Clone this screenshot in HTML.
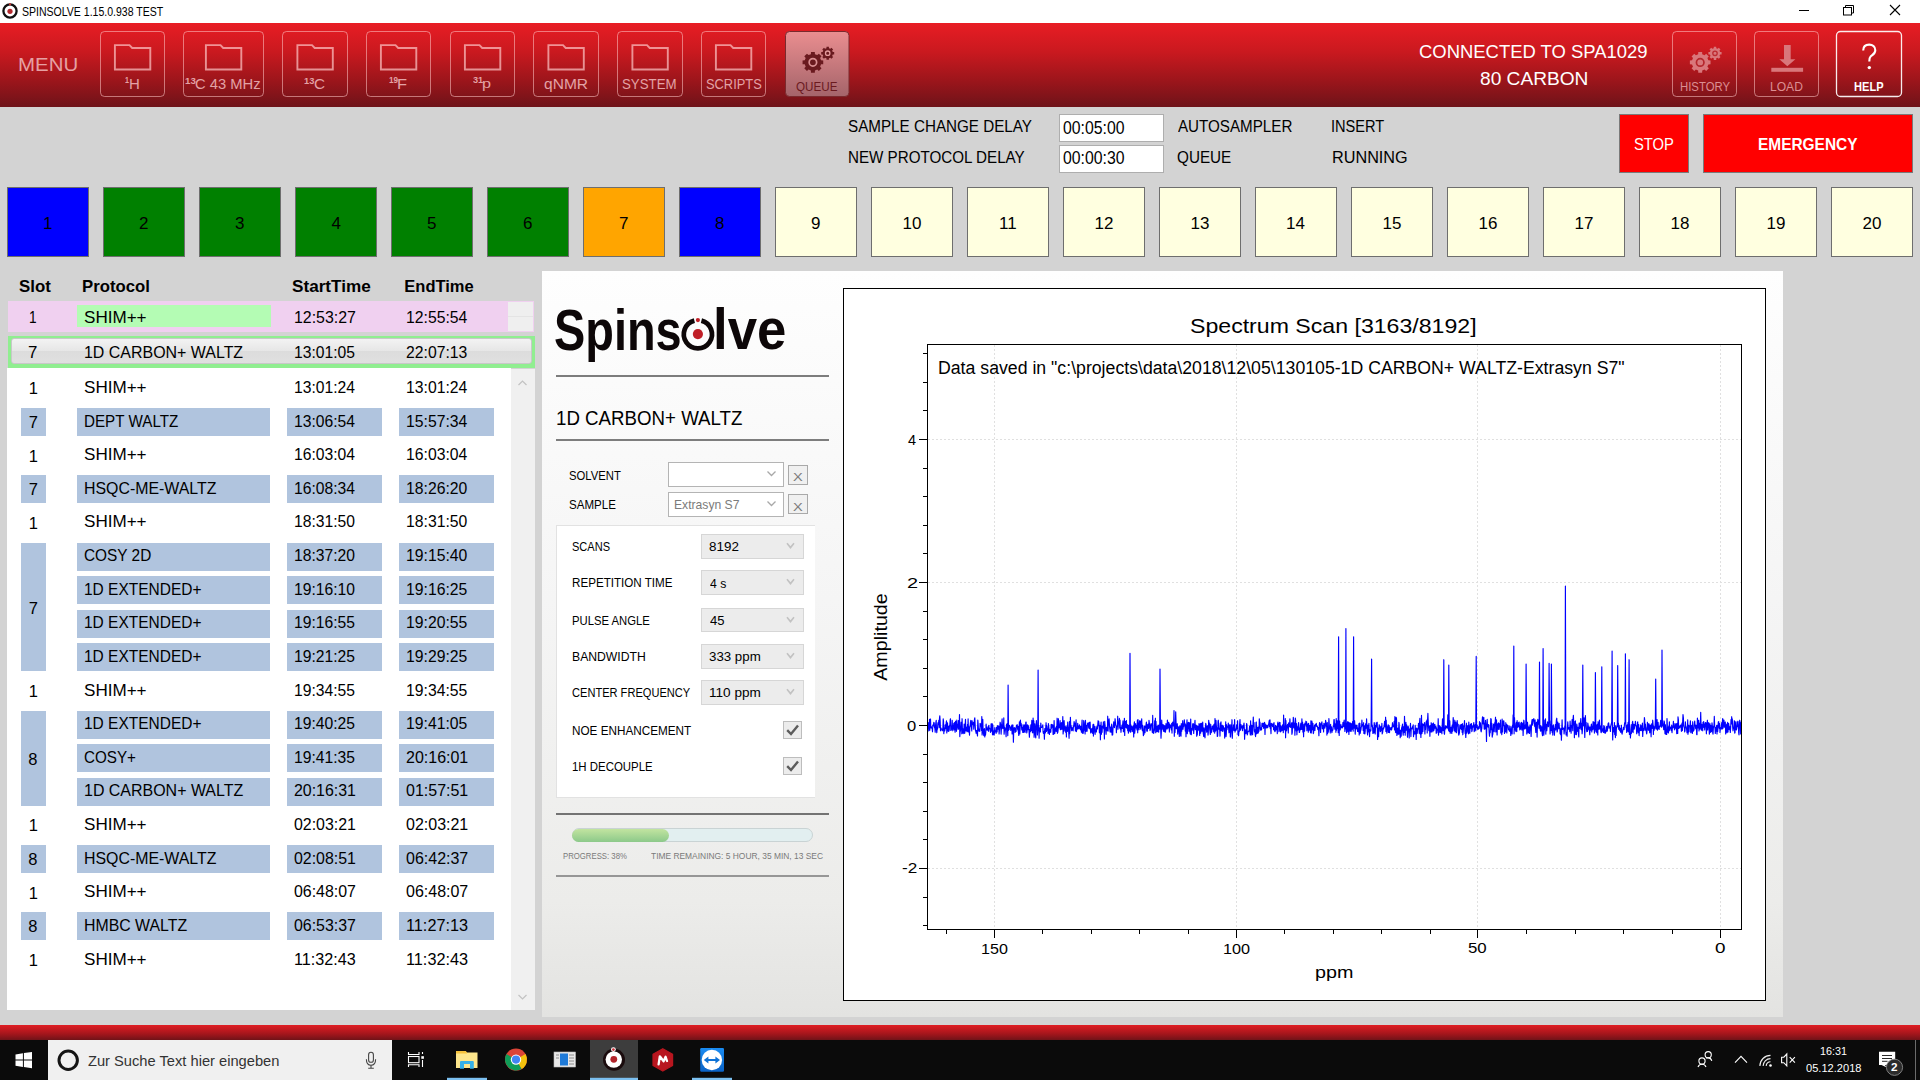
<!DOCTYPE html>
<html><head><meta charset="utf-8"><title>Spinsolve</title>
<style>
html,body{margin:0;padding:0;}
body{width:1920px;height:1080px;overflow:hidden;position:relative;background:#d3d3d3;font-family:"Liberation Sans",sans-serif;}
.t{position:absolute;white-space:nowrap;}
.a{position:absolute;box-sizing:border-box;}

</style></head><body>
<div class=a style='left:0;top:0;width:1920px;height:23px;background:#fff'></div><svg class=a style='left:0;top:0' width=22 height=23 viewBox='0 0 22 23'>
<circle cx='10' cy='11' r='6.6' fill='none' stroke='#111' stroke-width='2.3'/>
<circle cx='10' cy='11.3' r='2.6' fill='#b3282d'/>
<circle cx='10' cy='4.3' r='1.1' fill='#c33'/>
</svg><div class=t style='left:22.12px;top:6.00px;font-size:12px;line-height:12px;font-weight:400;color:#000;font-family:"Liberation Sans",sans-serif;transform:scaleX(0.8769);transform-origin:0 0;'>SPINSOLVE 1.15.0.938 TEST</div><svg class=a style='left:1780px;top:0' width=140 height=23 viewBox='1780 0 140 23'>
<line x1='1799' y1='10.5' x2='1809' y2='10.5' stroke='#000' stroke-width='1'/>
<rect x='1843.5' y='7.5' width='8' height='7.5' fill='none' stroke='#000' stroke-width='1'/>
<path d='M1845.5 7.5 V5.5 H1853.5 V13 H1851.5' fill='none' stroke='#000' stroke-width='1'/>
<path d='M1890 5 L1900 15 M1900 5 L1890 15' stroke='#000' stroke-width='1.1'/>
</svg><div class=a style='left:0;top:23px;width:1920px;height:84px;background:linear-gradient(#e81d24 0%,#c9191f 35%,#9a151b 70%,#6e1319 100%)'></div><div class=t style='left:18.35px;top:55.00px;font-size:19px;line-height:19px;font-weight:400;color:#e6a0a3;font-family:"Liberation Sans",sans-serif;transform:scaleX(1.0755);transform-origin:0 0;'>MENU</div><svg class=a style='left:0;top:0' width=1920 height=110 viewBox='0 0 1920 110'><rect x='100.5' y='31.5' width='64' height='65' rx='4' ry='4' fill='none' stroke='rgba(255,200,200,0.55)' stroke-width='1'/><path d='M114.9 45.1 H129.5 L132.2 48.0 H150.3 V69.5 H114.9 Z' fill='none' stroke='rgba(255,205,205,0.68)' stroke-width='1.9'/><rect x='183.5' y='31.5' width='80' height='65' rx='4' ry='4' fill='none' stroke='rgba(255,200,200,0.55)' stroke-width='1'/><path d='M205.9 45.1 H220.5 L223.2 48.0 H241.3 V69.5 H205.9 Z' fill='none' stroke='rgba(255,205,205,0.68)' stroke-width='1.9'/><rect x='282.5' y='31.5' width='65' height='65' rx='4' ry='4' fill='none' stroke='rgba(255,200,200,0.55)' stroke-width='1'/><path d='M297.4 45.1 H312.0 L314.7 48.0 H332.8 V69.5 H297.4 Z' fill='none' stroke='rgba(255,205,205,0.68)' stroke-width='1.9'/><rect x='366.5' y='31.5' width='64' height='65' rx='4' ry='4' fill='none' stroke='rgba(255,200,200,0.55)' stroke-width='1'/><path d='M380.9 45.1 H395.5 L398.2 48.0 H416.3 V69.5 H380.9 Z' fill='none' stroke='rgba(255,205,205,0.68)' stroke-width='1.9'/><rect x='450.5' y='31.5' width='64' height='65' rx='4' ry='4' fill='none' stroke='rgba(255,200,200,0.55)' stroke-width='1'/><path d='M464.9 45.1 H479.5 L482.2 48.0 H500.3 V69.5 H464.9 Z' fill='none' stroke='rgba(255,205,205,0.68)' stroke-width='1.9'/><rect x='533.5' y='31.5' width='65' height='65' rx='4' ry='4' fill='none' stroke='rgba(255,200,200,0.55)' stroke-width='1'/><path d='M548.4 45.1 H563.0 L565.7 48.0 H583.8 V69.5 H548.4 Z' fill='none' stroke='rgba(255,205,205,0.68)' stroke-width='1.9'/><rect x='617.5' y='31.5' width='65' height='65' rx='4' ry='4' fill='none' stroke='rgba(255,200,200,0.55)' stroke-width='1'/><path d='M632.4 45.1 H647.0 L649.7 48.0 H667.8 V69.5 H632.4 Z' fill='none' stroke='rgba(255,205,205,0.68)' stroke-width='1.9'/><rect x='701.5' y='31.5' width='64' height='65' rx='4' ry='4' fill='none' stroke='rgba(255,200,200,0.55)' stroke-width='1'/><path d='M715.9 45.1 H730.5 L733.2 48.0 H751.3 V69.5 H715.9 Z' fill='none' stroke='rgba(255,205,205,0.68)' stroke-width='1.9'/><defs><linearGradient id='qg' x1='0' y1='0' x2='0' y2='1'><stop offset='0' stop-color='#ea8e90'/><stop offset='1' stop-color='#a4646a'/></linearGradient></defs><rect x='785.5' y='31.5' width='63.5' height='65' rx='4' fill='url(#qg)' stroke='#7a2a2e' stroke-width='1'/><path d='M821.05 60.27 L823.23 60.39 L823.23 64.21 L821.05 64.33 L820.10 66.63 L821.55 68.25 L818.85 70.95 L817.23 69.50 L814.93 70.45 L814.81 72.63 L810.99 72.63 L810.87 70.45 L808.57 69.50 L806.95 70.95 L804.25 68.25 L805.70 66.63 L804.75 64.33 L802.57 64.21 L802.57 60.39 L804.75 60.27 L805.70 57.97 L804.25 56.35 L806.95 53.65 L808.57 55.10 L810.87 54.15 L810.99 51.97 L814.81 51.97 L814.93 54.15 L817.23 55.10 L818.85 53.65 L821.55 56.35 L820.10 57.97 Z' fill='#6a1a1f'/><circle cx='812.9' cy='62.3' r='3.75' fill='none' stroke='#d98f92' stroke-width='1.7'/><path d='M832.75 51.95 L834.19 52.00 L834.19 54.40 L832.75 54.45 L832.15 55.88 L833.14 56.94 L831.44 58.64 L830.38 57.65 L828.95 58.25 L828.90 59.69 L826.50 59.69 L826.45 58.25 L825.02 57.65 L823.96 58.64 L822.26 56.94 L823.25 55.88 L822.65 54.45 L821.21 54.40 L821.21 52.00 L822.65 51.95 L823.25 50.52 L822.26 49.46 L823.96 47.76 L825.02 48.75 L826.45 48.15 L826.50 46.71 L828.90 46.71 L828.95 48.15 L830.38 48.75 L831.44 47.76 L833.14 49.46 L832.15 50.52 Z' fill='#6a1a1f'/><circle cx='827.7' cy='53.2' r='2.2' fill='none' stroke='#e39a9c' stroke-width='1.3'/><rect x='1672.5' y='31.5' width='64' height='65' rx='4' fill='none' stroke='rgba(255,200,200,0.55)' stroke-width='1'/><rect x='1754.5' y='31.5' width='64' height='65' rx='4' fill='none' stroke='rgba(255,200,200,0.55)' stroke-width='1'/><rect x='1836.5' y='31.5' width='65' height='65' rx='4' fill='none' stroke='rgba(255,255,255,0.92)' stroke-width='1.3'/><path d='M1708.35 60.37 L1710.53 60.49 L1710.53 64.31 L1708.35 64.43 L1707.40 66.73 L1708.85 68.35 L1706.15 71.05 L1704.53 69.60 L1702.23 70.55 L1702.11 72.73 L1698.29 72.73 L1698.17 70.55 L1695.87 69.60 L1694.25 71.05 L1691.55 68.35 L1693.00 66.73 L1692.05 64.43 L1689.87 64.31 L1689.87 60.49 L1692.05 60.37 L1693.00 58.07 L1691.55 56.45 L1694.25 53.75 L1695.87 55.20 L1698.17 54.25 L1698.29 52.07 L1702.11 52.07 L1702.23 54.25 L1704.53 55.20 L1706.15 53.75 L1708.85 56.45 L1707.40 58.07 Z' fill='#d9777b'/><circle cx='1700.2' cy='62.4' r='3.75' fill='none' stroke='#b5262c' stroke-width='1.7'/><path d='M1720.05 52.05 L1721.59 52.08 L1721.59 54.52 L1720.05 54.55 L1719.45 55.98 L1720.52 57.10 L1718.80 58.82 L1717.68 57.75 L1716.25 58.35 L1716.22 59.89 L1713.78 59.89 L1713.75 58.35 L1712.32 57.75 L1711.20 58.82 L1709.48 57.10 L1710.55 55.98 L1709.95 54.55 L1708.41 54.52 L1708.41 52.08 L1709.95 52.05 L1710.55 50.62 L1709.48 49.50 L1711.20 47.78 L1712.32 48.85 L1713.75 48.25 L1713.78 46.71 L1716.22 46.71 L1716.25 48.25 L1717.68 48.85 L1718.80 47.78 L1720.52 49.50 L1719.45 50.62 Z' fill='#d9777b'/><circle cx='1715' cy='53.3' r='2.2' fill='none' stroke='#bd2a30' stroke-width='1.3'/><path d='M1784 45 H1790.7 V59.3 H1795.4 L1787.35 66.3 L1779.3 59.3 H1784 Z' fill='#d9777b'/><rect x='1771.3' y='67.8' width='31.8' height='4' fill='#d9777b'/><path d='M1863.2 50.5 C1863.2 46.3 1866 44.6 1869.2 44.6 C1872.6 44.6 1875.3 46.6 1875.3 50.2 C1875.3 53.8 1872.2 55 1870.6 56.6 C1869.5 57.7 1869.3 58.8 1869.3 61.6' fill='none' stroke='#fff' stroke-width='2.1'/><circle cx='1869.3' cy='67.6' r='1.7' fill='#fff'/></svg><div class=t style='left:124.75px;top:75.00px;font-size:9.5px;line-height:9.5px;font-weight:700;color:#e3a2a6;font-family:"Liberation Sans",sans-serif;transform:scaleX(0.7500);transform-origin:0 0;'>1</div><div class=t style='left:129.00px;top:76.00px;font-size:15px;line-height:15px;font-weight:400;color:#e3a2a6;font-family:"Liberation Sans",sans-serif;'>H</div><div class=t style='left:185.38px;top:75.50px;font-size:9.5px;line-height:9.5px;font-weight:700;color:#e3a2a6;font-family:"Liberation Sans",sans-serif;transform:scaleX(1.0222);transform-origin:0 0;'>13</div><div class=t style='left:195.32px;top:76.20px;font-size:15px;line-height:15px;font-weight:400;color:#e3a2a6;font-family:"Liberation Sans",sans-serif;transform:scaleX(0.9846);transform-origin:0 0;'>C 43 MHz</div><div class=t style='left:304.32px;top:75.50px;font-size:9.5px;line-height:9.5px;font-weight:700;color:#e3a2a6;font-family:"Liberation Sans",sans-serif;transform:scaleX(0.9778);transform-origin:0 0;'>13</div><div class=t style='left:313.78px;top:76.20px;font-size:15px;line-height:15px;font-weight:400;color:#e3a2a6;font-family:"Liberation Sans",sans-serif;transform:scaleX(1.0222);transform-origin:0 0;'>C</div><div class=t style='left:388.89px;top:75.00px;font-size:9.5px;line-height:9.5px;font-weight:700;color:#e3a2a6;font-family:"Liberation Sans",sans-serif;transform:scaleX(0.8611);transform-origin:0 0;'>19</div><div class=t style='left:397.41px;top:75.90px;font-size:15px;line-height:15px;font-weight:400;color:#e3a2a6;font-family:"Liberation Sans",sans-serif;transform:scaleX(1.0938);transform-origin:0 0;'>F</div><div class=t style='left:473.10px;top:75.00px;font-size:9.5px;line-height:9.5px;font-weight:700;color:#e3a2a6;font-family:"Liberation Sans",sans-serif;transform:scaleX(0.9650);transform-origin:0 0;'>31</div><div class=t style='left:482.25px;top:76.50px;font-size:13px;line-height:13px;font-weight:400;color:#e3a2a6;font-family:"Liberation Sans",sans-serif;transform:scaleX(1.2500);transform-origin:0 0;'>p</div><div class=t style='left:543.71px;top:75.90px;font-size:15px;line-height:15px;font-weight:400;color:#e3a2a6;font-family:"Liberation Sans",sans-serif;transform:scaleX(1.0366);transform-origin:0 0;'>qNMR</div><div class=t style='left:622.21px;top:76.25px;font-size:15px;line-height:15px;font-weight:400;color:#e3a2a6;font-family:"Liberation Sans",sans-serif;transform:scaleX(0.8858);transform-origin:0 0;'>SYSTEM</div><div class=t style='left:705.74px;top:76.25px;font-size:15px;line-height:15px;font-weight:400;color:#e3a2a6;font-family:"Liberation Sans",sans-serif;transform:scaleX(0.8571);transform-origin:0 0;'>SCRIPTS</div><div class=t style='left:796.07px;top:81.10px;font-size:12.5px;line-height:12.5px;font-weight:400;color:#6b1a1f;font-family:"Liberation Sans",sans-serif;transform:scaleX(0.9326);transform-origin:0 0;'>QUEUE</div><div class=t style='left:1419.43px;top:41.90px;font-size:19px;line-height:19px;font-weight:400;color:#fff;font-family:"Liberation Sans",sans-serif;transform:scaleX(0.9705);transform-origin:0 0;'>CONNECTED TO SPA1029</div><div class=t style='left:1479.99px;top:68.90px;font-size:19px;line-height:19px;font-weight:400;color:#fff;font-family:"Liberation Sans",sans-serif;transform:scaleX(1.0067);transform-origin:0 0;'>80 CARBON</div><div class=t style='left:1679.65px;top:81.30px;font-size:12px;line-height:12px;font-weight:400;color:#dc8e92;font-family:"Liberation Sans",sans-serif;transform:scaleX(0.9451);transform-origin:0 0;'>HISTORY</div><div class=t style='left:1769.99px;top:81.30px;font-size:12px;line-height:12px;font-weight:400;color:#dc8e92;font-family:"Liberation Sans",sans-serif;transform:scaleX(1.0065);transform-origin:0 0;'>LOAD</div><div class=t style='left:1853.68px;top:81.30px;font-size:12px;line-height:12px;font-weight:700;color:#fff;font-family:"Liberation Sans",sans-serif;transform:scaleX(0.9226);transform-origin:0 0;'>HELP</div><div class=t style='left:848.45px;top:119.10px;font-size:16px;line-height:16px;font-weight:400;color:#000;font-family:"Liberation Sans",sans-serif;transform:scaleX(0.9505);transform-origin:0 0;'>SAMPLE CHANGE DELAY</div><div class=t style='left:848.45px;top:150.10px;font-size:16px;line-height:16px;font-weight:400;color:#000;font-family:"Liberation Sans",sans-serif;transform:scaleX(0.9478);transform-origin:0 0;'>NEW PROTOCOL DELAY</div><div class=a style='left:1059px;top:114px;width:105px;height:28px;background:#fff;border:1px solid #aeaeae'></div><div class=a style='left:1059px;top:145px;width:105px;height:28px;background:#fff;border:1px solid #aeaeae'></div><div class=t style='left:1062.85px;top:120.25px;font-size:17.5px;line-height:17.5px;font-weight:400;color:#000;font-family:"Liberation Sans",sans-serif;transform:scaleX(0.9030);transform-origin:0 0;'>00:05:00</div><div class=t style='left:1062.85px;top:150.25px;font-size:17.5px;line-height:17.5px;font-weight:400;color:#000;font-family:"Liberation Sans",sans-serif;transform:scaleX(0.9030);transform-origin:0 0;'>00:00:30</div><div class=t style='left:1178.20px;top:119.10px;font-size:16px;line-height:16px;font-weight:400;color:#000;font-family:"Liberation Sans",sans-serif;transform:scaleX(0.9483);transform-origin:0 0;'>AUTOSAMPLER</div><div class=t style='left:1177.25px;top:150.10px;font-size:16px;line-height:16px;font-weight:400;color:#000;font-family:"Liberation Sans",sans-serif;transform:scaleX(0.9545);transform-origin:0 0;'>QUEUE</div><div class=t style='left:1330.97px;top:119.10px;font-size:16px;line-height:16px;font-weight:400;color:#000;font-family:"Liberation Sans",sans-serif;transform:scaleX(0.9125);transform-origin:0 0;'>INSERT</div><div class=t style='left:1331.79px;top:150.10px;font-size:16px;line-height:16px;font-weight:400;color:#000;font-family:"Liberation Sans",sans-serif;transform:scaleX(1.0137);transform-origin:0 0;'>RUNNING</div><div class=a style='left:1619px;top:114px;width:70px;height:59px;background:#ff0000;border:1px solid #7a7a7a'></div><div class=a style='left:1703px;top:114px;width:210px;height:59px;background:#ff0000;border:1px solid #7a7a7a'></div><div class=t style='left:1633.60px;top:136.00px;font-size:16.5px;line-height:16.5px;font-weight:400;color:#fff;font-family:"Liberation Sans",sans-serif;transform:scaleX(0.8953);transform-origin:0 0;'>STOP</div><div class=t style='left:1757.81px;top:136.00px;font-size:16.5px;line-height:16.5px;font-weight:700;color:#fff;font-family:"Liberation Sans",sans-serif;transform:scaleX(0.9357);transform-origin:0 0;'>EMERGENCY</div><div class=a style='left:7px;top:187px;width:82px;height:70px;background:#0000ff;border:1px solid #6e6e6e'></div><div class=t style='left:43.00px;top:214.90px;font-size:17px;line-height:17px;font-weight:400;color:#000;font-family:"Liberation Sans",sans-serif;'>1</div><div class=a style='left:103px;top:187px;width:82px;height:70px;background:#008000;border:1px solid #6e6e6e'></div><div class=t style='left:139.00px;top:214.90px;font-size:17px;line-height:17px;font-weight:400;color:#000;font-family:"Liberation Sans",sans-serif;'>2</div><div class=a style='left:199px;top:187px;width:82px;height:70px;background:#008000;border:1px solid #6e6e6e'></div><div class=t style='left:235.00px;top:214.90px;font-size:17px;line-height:17px;font-weight:400;color:#000;font-family:"Liberation Sans",sans-serif;'>3</div><div class=a style='left:295px;top:187px;width:82px;height:70px;background:#008000;border:1px solid #6e6e6e'></div><div class=t style='left:331.50px;top:214.90px;font-size:17px;line-height:17px;font-weight:400;color:#000;font-family:"Liberation Sans",sans-serif;'>4</div><div class=a style='left:391px;top:187px;width:82px;height:70px;background:#008000;border:1px solid #6e6e6e'></div><div class=t style='left:427.00px;top:214.90px;font-size:17px;line-height:17px;font-weight:400;color:#000;font-family:"Liberation Sans",sans-serif;'>5</div><div class=a style='left:487px;top:187px;width:82px;height:70px;background:#008000;border:1px solid #6e6e6e'></div><div class=t style='left:523.00px;top:214.90px;font-size:17px;line-height:17px;font-weight:400;color:#000;font-family:"Liberation Sans",sans-serif;'>6</div><div class=a style='left:583px;top:187px;width:82px;height:70px;background:#ffa500;border:1px solid #6e6e6e'></div><div class=t style='left:619.00px;top:214.90px;font-size:17px;line-height:17px;font-weight:400;color:#000;font-family:"Liberation Sans",sans-serif;'>7</div><div class=a style='left:679px;top:187px;width:82px;height:70px;background:#0000ff;border:1px solid #6e6e6e'></div><div class=t style='left:715.00px;top:214.90px;font-size:17px;line-height:17px;font-weight:400;color:#000;font-family:"Liberation Sans",sans-serif;'>8</div><div class=a style='left:775px;top:187px;width:82px;height:70px;background:#ffffe0;border:1px solid #6e6e6e'></div><div class=t style='left:811.00px;top:214.90px;font-size:17px;line-height:17px;font-weight:400;color:#000;font-family:"Liberation Sans",sans-serif;'>9</div><div class=a style='left:871px;top:187px;width:82px;height:70px;background:#ffffe0;border:1px solid #6e6e6e'></div><div class=t style='left:902.50px;top:214.90px;font-size:17px;line-height:17px;font-weight:400;color:#000;font-family:"Liberation Sans",sans-serif;'>10</div><div class=a style='left:967px;top:187px;width:82px;height:70px;background:#ffffe0;border:1px solid #6e6e6e'></div><div class=t style='left:999.00px;top:214.90px;font-size:17px;line-height:17px;font-weight:400;color:#000;font-family:"Liberation Sans",sans-serif;'>11</div><div class=a style='left:1063px;top:187px;width:82px;height:70px;background:#ffffe0;border:1px solid #6e6e6e'></div><div class=t style='left:1094.50px;top:214.90px;font-size:17px;line-height:17px;font-weight:400;color:#000;font-family:"Liberation Sans",sans-serif;'>12</div><div class=a style='left:1159px;top:187px;width:82px;height:70px;background:#ffffe0;border:1px solid #6e6e6e'></div><div class=t style='left:1190.50px;top:214.90px;font-size:17px;line-height:17px;font-weight:400;color:#000;font-family:"Liberation Sans",sans-serif;'>13</div><div class=a style='left:1255px;top:187px;width:82px;height:70px;background:#ffffe0;border:1px solid #6e6e6e'></div><div class=t style='left:1286.00px;top:214.90px;font-size:17px;line-height:17px;font-weight:400;color:#000;font-family:"Liberation Sans",sans-serif;'>14</div><div class=a style='left:1351px;top:187px;width:82px;height:70px;background:#ffffe0;border:1px solid #6e6e6e'></div><div class=t style='left:1382.50px;top:214.90px;font-size:17px;line-height:17px;font-weight:400;color:#000;font-family:"Liberation Sans",sans-serif;'>15</div><div class=a style='left:1447px;top:187px;width:82px;height:70px;background:#ffffe0;border:1px solid #6e6e6e'></div><div class=t style='left:1478.50px;top:214.90px;font-size:17px;line-height:17px;font-weight:400;color:#000;font-family:"Liberation Sans",sans-serif;'>16</div><div class=a style='left:1543px;top:187px;width:82px;height:70px;background:#ffffe0;border:1px solid #6e6e6e'></div><div class=t style='left:1574.50px;top:214.90px;font-size:17px;line-height:17px;font-weight:400;color:#000;font-family:"Liberation Sans",sans-serif;'>17</div><div class=a style='left:1639px;top:187px;width:82px;height:70px;background:#ffffe0;border:1px solid #6e6e6e'></div><div class=t style='left:1670.50px;top:214.90px;font-size:17px;line-height:17px;font-weight:400;color:#000;font-family:"Liberation Sans",sans-serif;'>18</div><div class=a style='left:1735px;top:187px;width:82px;height:70px;background:#ffffe0;border:1px solid #6e6e6e'></div><div class=t style='left:1766.50px;top:214.90px;font-size:17px;line-height:17px;font-weight:400;color:#000;font-family:"Liberation Sans",sans-serif;'>19</div><div class=a style='left:1831px;top:187px;width:82px;height:70px;background:#ffffe0;border:1px solid #6e6e6e'></div><div class=t style='left:1862.50px;top:214.90px;font-size:17px;line-height:17px;font-weight:400;color:#000;font-family:"Liberation Sans",sans-serif;'>20</div><div class=t style='left:18.98px;top:278.00px;font-size:16.5px;line-height:16.5px;font-weight:700;color:#000;font-family:"Liberation Sans",sans-serif;transform:scaleX(1.0200);transform-origin:0 0;'>Slot</div><div class=t style='left:82.49px;top:278.00px;font-size:16.5px;line-height:16.5px;font-weight:700;color:#000;font-family:"Liberation Sans",sans-serif;transform:scaleX(1.0138);transform-origin:0 0;'>Protocol</div><div class=t style='left:291.86px;top:278.10px;font-size:16.5px;line-height:16.5px;font-weight:700;color:#000;font-family:"Liberation Sans",sans-serif;transform:scaleX(1.0392);transform-origin:0 0;'>StartTime</div><div class=t style='left:404.30px;top:278.10px;font-size:16.5px;line-height:16.5px;font-weight:700;color:#000;font-family:"Liberation Sans",sans-serif;'>EndTime</div><div class=a style='left:7px;top:368px;width:504px;height:642px;background:#fff'></div><div class=a style='left:511px;top:369px;width:24px;height:641px;background:#f0f0f0'></div><svg class=a style='left:511px;top:369px' width=24 height=641><path d='M7.5 16 L11.5 12 L15.5 16' fill='none' stroke='#c2c2c2' stroke-width='1.2'/><path d='M7.5 626 L11.5 630 L15.5 626' fill='none' stroke='#c2c2c2' stroke-width='1.2'/></svg><div class=a style='left:8px;top:300.5px;width:525.5px;height:31.5px;background:#f0d0f0'></div><div class=a style='left:77px;top:305px;width:193.5px;height:21.5px;background:#b4fcb4'></div><div class=a style='left:508px;top:302px;width:24.5px;height:29px;background:#efefef'></div><div class=a style='left:508px;top:316px;width:24.5px;height:1px;background:#e4e4e4'></div><div class=t style='left:28.77px;top:309.25px;font-size:16.5px;line-height:16.5px;font-weight:400;color:#000;font-family:"Liberation Sans",sans-serif;transform:scaleX(0.8286);transform-origin:0 0;'>1</div><div class=t style='left:83.57px;top:309.25px;font-size:16.5px;line-height:16.5px;font-weight:400;color:#000;font-family:"Liberation Sans",sans-serif;transform:scaleX(1.0339);transform-origin:0 0;'>SHIM++</div><div class=t style='left:294.04px;top:308.80px;font-size:16.5px;line-height:16.5px;font-weight:400;color:#000;font-family:"Liberation Sans",sans-serif;transform:scaleX(0.9645);transform-origin:0 0;'>12:53:27</div><div class=t style='left:406.15px;top:308.80px;font-size:16.5px;line-height:16.5px;font-weight:400;color:#000;font-family:"Liberation Sans",sans-serif;transform:scaleX(0.9540);transform-origin:0 0;'>12:55:54</div><div class=a style='left:7.5px;top:335.5px;width:527px;height:32.5px;background:#90ee90'></div><div class=a style='left:10.5px;top:337.5px;width:521px;height:26px;border:1px solid #c8c8c8;border-radius:3px;background:linear-gradient(#f3f3f3,#e6e6e6 50%,#dcdcdc 51%,#e0e0e0)'></div><div class=t style='left:28.08px;top:343.60px;font-size:16.5px;line-height:16.5px;font-weight:400;color:#000;font-family:"Liberation Sans",sans-serif;transform:scaleX(1.0214);transform-origin:0 0;'>7</div><div class=t style='left:84.03px;top:344.00px;font-size:16.5px;line-height:16.5px;font-weight:400;color:#000;font-family:"Liberation Sans",sans-serif;transform:scaleX(0.9669);transform-origin:0 0;'>1D CARBON+ WALTZ</div><div class=t style='left:294.05px;top:344.00px;font-size:16.5px;line-height:16.5px;font-weight:400;color:#000;font-family:"Liberation Sans",sans-serif;transform:scaleX(0.9492);transform-origin:0 0;'>13:01:05</div><div class=t style='left:406.15px;top:344.00px;font-size:16.5px;line-height:16.5px;font-weight:400;color:#000;font-family:"Liberation Sans",sans-serif;transform:scaleX(0.9540);transform-origin:0 0;'>22:07:13</div><div class=a style='left:21px;top:542.50px;width:25px;height:128.86px;background:#b0c4de'></div><div class=t style='left:28.70px;top:599.63px;font-size:16.5px;line-height:16.5px;font-weight:400;color:#000;font-family:"Liberation Sans",sans-serif;'>7</div><div class=a style='left:21px;top:710.60px;width:25px;height:95.24px;background:#b0c4de'></div><div class=t style='left:28.20px;top:750.92px;font-size:16.5px;line-height:16.5px;font-weight:400;color:#000;font-family:"Liberation Sans",sans-serif;'>8</div><div class=t style='left:28.70px;top:380.30px;font-size:16.5px;line-height:16.5px;font-weight:400;color:#000;font-family:"Liberation Sans",sans-serif;'>1</div><div class=t style='left:83.57px;top:379.00px;font-size:16.5px;line-height:16.5px;font-weight:400;color:#000;font-family:"Liberation Sans",sans-serif;transform:scaleX(1.0339);transform-origin:0 0;'>SHIM++</div><div class=t style='left:294.05px;top:379.00px;font-size:16.5px;line-height:16.5px;font-weight:400;color:#000;font-family:"Liberation Sans",sans-serif;transform:scaleX(0.9492);transform-origin:0 0;'>13:01:24</div><div class=t style='left:406.15px;top:379.00px;font-size:16.5px;line-height:16.5px;font-weight:400;color:#000;font-family:"Liberation Sans",sans-serif;transform:scaleX(0.9540);transform-origin:0 0;'>13:01:24</div><div class=a style='left:21px;top:408.02px;width:25px;height:28px;background:#b0c4de'></div><div class=a style='left:77px;top:408.02px;width:193px;height:28px;background:#b0c4de'></div><div class=a style='left:287px;top:408.02px;width:95px;height:28px;background:#b0c4de'></div><div class=a style='left:399px;top:408.02px;width:95px;height:28px;background:#b0c4de'></div><div class=t style='left:28.70px;top:413.92px;font-size:16.5px;line-height:16.5px;font-weight:400;color:#000;font-family:"Liberation Sans",sans-serif;'>7</div><div class=t style='left:83.68px;top:412.62px;font-size:16.5px;line-height:16.5px;font-weight:400;color:#000;font-family:"Liberation Sans",sans-serif;transform:scaleX(0.9208);transform-origin:0 0;'>DEPT WALTZ</div><div class=t style='left:294.05px;top:412.62px;font-size:16.5px;line-height:16.5px;font-weight:400;color:#000;font-family:"Liberation Sans",sans-serif;transform:scaleX(0.9492);transform-origin:0 0;'>13:06:54</div><div class=t style='left:406.15px;top:412.62px;font-size:16.5px;line-height:16.5px;font-weight:400;color:#000;font-family:"Liberation Sans",sans-serif;transform:scaleX(0.9540);transform-origin:0 0;'>15:57:34</div><div class=t style='left:28.70px;top:447.54px;font-size:16.5px;line-height:16.5px;font-weight:400;color:#000;font-family:"Liberation Sans",sans-serif;'>1</div><div class=t style='left:83.57px;top:446.24px;font-size:16.5px;line-height:16.5px;font-weight:400;color:#000;font-family:"Liberation Sans",sans-serif;transform:scaleX(1.0339);transform-origin:0 0;'>SHIM++</div><div class=t style='left:294.05px;top:446.24px;font-size:16.5px;line-height:16.5px;font-weight:400;color:#000;font-family:"Liberation Sans",sans-serif;transform:scaleX(0.9492);transform-origin:0 0;'>16:03:04</div><div class=t style='left:406.15px;top:446.24px;font-size:16.5px;line-height:16.5px;font-weight:400;color:#000;font-family:"Liberation Sans",sans-serif;transform:scaleX(0.9540);transform-origin:0 0;'>16:03:04</div><div class=a style='left:21px;top:475.26px;width:25px;height:28px;background:#b0c4de'></div><div class=a style='left:77px;top:475.26px;width:193px;height:28px;background:#b0c4de'></div><div class=a style='left:287px;top:475.26px;width:95px;height:28px;background:#b0c4de'></div><div class=a style='left:399px;top:475.26px;width:95px;height:28px;background:#b0c4de'></div><div class=t style='left:28.70px;top:481.16px;font-size:16.5px;line-height:16.5px;font-weight:400;color:#000;font-family:"Liberation Sans",sans-serif;'>7</div><div class=t style='left:83.64px;top:479.86px;font-size:16.5px;line-height:16.5px;font-weight:400;color:#000;font-family:"Liberation Sans",sans-serif;transform:scaleX(0.9632);transform-origin:0 0;'>HSQC-ME-WALTZ</div><div class=t style='left:294.05px;top:479.86px;font-size:16.5px;line-height:16.5px;font-weight:400;color:#000;font-family:"Liberation Sans",sans-serif;transform:scaleX(0.9492);transform-origin:0 0;'>16:08:34</div><div class=t style='left:406.15px;top:479.86px;font-size:16.5px;line-height:16.5px;font-weight:400;color:#000;font-family:"Liberation Sans",sans-serif;transform:scaleX(0.9540);transform-origin:0 0;'>18:26:20</div><div class=t style='left:28.70px;top:514.78px;font-size:16.5px;line-height:16.5px;font-weight:400;color:#000;font-family:"Liberation Sans",sans-serif;'>1</div><div class=t style='left:83.57px;top:513.48px;font-size:16.5px;line-height:16.5px;font-weight:400;color:#000;font-family:"Liberation Sans",sans-serif;transform:scaleX(1.0339);transform-origin:0 0;'>SHIM++</div><div class=t style='left:294.05px;top:513.48px;font-size:16.5px;line-height:16.5px;font-weight:400;color:#000;font-family:"Liberation Sans",sans-serif;transform:scaleX(0.9492);transform-origin:0 0;'>18:31:50</div><div class=t style='left:406.15px;top:513.48px;font-size:16.5px;line-height:16.5px;font-weight:400;color:#000;font-family:"Liberation Sans",sans-serif;transform:scaleX(0.9540);transform-origin:0 0;'>18:31:50</div><div class=a style='left:77px;top:542.50px;width:193px;height:28px;background:#b0c4de'></div><div class=a style='left:287px;top:542.50px;width:95px;height:28px;background:#b0c4de'></div><div class=a style='left:399px;top:542.50px;width:95px;height:28px;background:#b0c4de'></div><div class=t style='left:83.67px;top:547.10px;font-size:16.5px;line-height:16.5px;font-weight:400;color:#000;font-family:"Liberation Sans",sans-serif;transform:scaleX(0.9329);transform-origin:0 0;'>COSY 2D</div><div class=t style='left:294.05px;top:547.10px;font-size:16.5px;line-height:16.5px;font-weight:400;color:#000;font-family:"Liberation Sans",sans-serif;transform:scaleX(0.9492);transform-origin:0 0;'>18:37:20</div><div class=t style='left:406.15px;top:547.10px;font-size:16.5px;line-height:16.5px;font-weight:400;color:#000;font-family:"Liberation Sans",sans-serif;transform:scaleX(0.9540);transform-origin:0 0;'>19:15:40</div><div class=a style='left:77px;top:576.12px;width:193px;height:28px;background:#b0c4de'></div><div class=a style='left:287px;top:576.12px;width:95px;height:28px;background:#b0c4de'></div><div class=a style='left:399px;top:576.12px;width:95px;height:28px;background:#b0c4de'></div><div class=t style='left:83.66px;top:580.72px;font-size:16.5px;line-height:16.5px;font-weight:400;color:#000;font-family:"Liberation Sans",sans-serif;transform:scaleX(0.9382);transform-origin:0 0;'>1D EXTENDED+</div><div class=t style='left:294.05px;top:580.72px;font-size:16.5px;line-height:16.5px;font-weight:400;color:#000;font-family:"Liberation Sans",sans-serif;transform:scaleX(0.9492);transform-origin:0 0;'>19:16:10</div><div class=t style='left:406.15px;top:580.72px;font-size:16.5px;line-height:16.5px;font-weight:400;color:#000;font-family:"Liberation Sans",sans-serif;transform:scaleX(0.9540);transform-origin:0 0;'>19:16:25</div><div class=a style='left:77px;top:609.74px;width:193px;height:28px;background:#b0c4de'></div><div class=a style='left:287px;top:609.74px;width:95px;height:28px;background:#b0c4de'></div><div class=a style='left:399px;top:609.74px;width:95px;height:28px;background:#b0c4de'></div><div class=t style='left:83.66px;top:614.34px;font-size:16.5px;line-height:16.5px;font-weight:400;color:#000;font-family:"Liberation Sans",sans-serif;transform:scaleX(0.9382);transform-origin:0 0;'>1D EXTENDED+</div><div class=t style='left:294.05px;top:614.34px;font-size:16.5px;line-height:16.5px;font-weight:400;color:#000;font-family:"Liberation Sans",sans-serif;transform:scaleX(0.9492);transform-origin:0 0;'>19:16:55</div><div class=t style='left:406.15px;top:614.34px;font-size:16.5px;line-height:16.5px;font-weight:400;color:#000;font-family:"Liberation Sans",sans-serif;transform:scaleX(0.9540);transform-origin:0 0;'>19:20:55</div><div class=a style='left:77px;top:643.36px;width:193px;height:28px;background:#b0c4de'></div><div class=a style='left:287px;top:643.36px;width:95px;height:28px;background:#b0c4de'></div><div class=a style='left:399px;top:643.36px;width:95px;height:28px;background:#b0c4de'></div><div class=t style='left:83.66px;top:647.96px;font-size:16.5px;line-height:16.5px;font-weight:400;color:#000;font-family:"Liberation Sans",sans-serif;transform:scaleX(0.9382);transform-origin:0 0;'>1D EXTENDED+</div><div class=t style='left:294.05px;top:647.96px;font-size:16.5px;line-height:16.5px;font-weight:400;color:#000;font-family:"Liberation Sans",sans-serif;transform:scaleX(0.9492);transform-origin:0 0;'>19:21:25</div><div class=t style='left:406.15px;top:647.96px;font-size:16.5px;line-height:16.5px;font-weight:400;color:#000;font-family:"Liberation Sans",sans-serif;transform:scaleX(0.9540);transform-origin:0 0;'>19:29:25</div><div class=t style='left:28.70px;top:682.88px;font-size:16.5px;line-height:16.5px;font-weight:400;color:#000;font-family:"Liberation Sans",sans-serif;'>1</div><div class=t style='left:83.57px;top:681.58px;font-size:16.5px;line-height:16.5px;font-weight:400;color:#000;font-family:"Liberation Sans",sans-serif;transform:scaleX(1.0339);transform-origin:0 0;'>SHIM++</div><div class=t style='left:294.05px;top:681.58px;font-size:16.5px;line-height:16.5px;font-weight:400;color:#000;font-family:"Liberation Sans",sans-serif;transform:scaleX(0.9492);transform-origin:0 0;'>19:34:55</div><div class=t style='left:406.15px;top:681.58px;font-size:16.5px;line-height:16.5px;font-weight:400;color:#000;font-family:"Liberation Sans",sans-serif;transform:scaleX(0.9540);transform-origin:0 0;'>19:34:55</div><div class=a style='left:77px;top:710.60px;width:193px;height:28px;background:#b0c4de'></div><div class=a style='left:287px;top:710.60px;width:95px;height:28px;background:#b0c4de'></div><div class=a style='left:399px;top:710.60px;width:95px;height:28px;background:#b0c4de'></div><div class=t style='left:83.66px;top:715.20px;font-size:16.5px;line-height:16.5px;font-weight:400;color:#000;font-family:"Liberation Sans",sans-serif;transform:scaleX(0.9382);transform-origin:0 0;'>1D EXTENDED+</div><div class=t style='left:294.05px;top:715.20px;font-size:16.5px;line-height:16.5px;font-weight:400;color:#000;font-family:"Liberation Sans",sans-serif;transform:scaleX(0.9492);transform-origin:0 0;'>19:40:25</div><div class=t style='left:406.15px;top:715.20px;font-size:16.5px;line-height:16.5px;font-weight:400;color:#000;font-family:"Liberation Sans",sans-serif;transform:scaleX(0.9540);transform-origin:0 0;'>19:41:05</div><div class=a style='left:77px;top:744.22px;width:193px;height:28px;background:#b0c4de'></div><div class=a style='left:287px;top:744.22px;width:95px;height:28px;background:#b0c4de'></div><div class=a style='left:399px;top:744.22px;width:95px;height:28px;background:#b0c4de'></div><div class=t style='left:83.68px;top:748.82px;font-size:16.5px;line-height:16.5px;font-weight:400;color:#000;font-family:"Liberation Sans",sans-serif;transform:scaleX(0.9218);transform-origin:0 0;'>COSY+</div><div class=t style='left:294.05px;top:748.82px;font-size:16.5px;line-height:16.5px;font-weight:400;color:#000;font-family:"Liberation Sans",sans-serif;transform:scaleX(0.9492);transform-origin:0 0;'>19:41:35</div><div class=t style='left:406.13px;top:748.82px;font-size:16.5px;line-height:16.5px;font-weight:400;color:#000;font-family:"Liberation Sans",sans-serif;transform:scaleX(0.9694);transform-origin:0 0;'>20:16:01</div><div class=a style='left:77px;top:777.84px;width:193px;height:28px;background:#b0c4de'></div><div class=a style='left:287px;top:777.84px;width:95px;height:28px;background:#b0c4de'></div><div class=a style='left:399px;top:777.84px;width:95px;height:28px;background:#b0c4de'></div><div class=t style='left:83.63px;top:782.44px;font-size:16.5px;line-height:16.5px;font-weight:400;color:#000;font-family:"Liberation Sans",sans-serif;transform:scaleX(0.9675);transform-origin:0 0;'>1D CARBON+ WALTZ</div><div class=t style='left:294.04px;top:782.44px;font-size:16.5px;line-height:16.5px;font-weight:400;color:#000;font-family:"Liberation Sans",sans-serif;transform:scaleX(0.9645);transform-origin:0 0;'>20:16:31</div><div class=t style='left:406.13px;top:782.44px;font-size:16.5px;line-height:16.5px;font-weight:400;color:#000;font-family:"Liberation Sans",sans-serif;transform:scaleX(0.9694);transform-origin:0 0;'>01:57:51</div><div class=t style='left:28.70px;top:817.36px;font-size:16.5px;line-height:16.5px;font-weight:400;color:#000;font-family:"Liberation Sans",sans-serif;'>1</div><div class=t style='left:83.57px;top:816.06px;font-size:16.5px;line-height:16.5px;font-weight:400;color:#000;font-family:"Liberation Sans",sans-serif;transform:scaleX(1.0339);transform-origin:0 0;'>SHIM++</div><div class=t style='left:294.04px;top:816.06px;font-size:16.5px;line-height:16.5px;font-weight:400;color:#000;font-family:"Liberation Sans",sans-serif;transform:scaleX(0.9645);transform-origin:0 0;'>02:03:21</div><div class=t style='left:406.13px;top:816.06px;font-size:16.5px;line-height:16.5px;font-weight:400;color:#000;font-family:"Liberation Sans",sans-serif;transform:scaleX(0.9694);transform-origin:0 0;'>02:03:21</div><div class=a style='left:21px;top:845.08px;width:25px;height:28px;background:#b0c4de'></div><div class=a style='left:77px;top:845.08px;width:193px;height:28px;background:#b0c4de'></div><div class=a style='left:287px;top:845.08px;width:95px;height:28px;background:#b0c4de'></div><div class=a style='left:399px;top:845.08px;width:95px;height:28px;background:#b0c4de'></div><div class=t style='left:28.20px;top:850.98px;font-size:16.5px;line-height:16.5px;font-weight:400;color:#000;font-family:"Liberation Sans",sans-serif;'>8</div><div class=t style='left:83.64px;top:849.68px;font-size:16.5px;line-height:16.5px;font-weight:400;color:#000;font-family:"Liberation Sans",sans-serif;transform:scaleX(0.9632);transform-origin:0 0;'>HSQC-ME-WALTZ</div><div class=t style='left:294.04px;top:849.68px;font-size:16.5px;line-height:16.5px;font-weight:400;color:#000;font-family:"Liberation Sans",sans-serif;transform:scaleX(0.9645);transform-origin:0 0;'>02:08:51</div><div class=t style='left:406.13px;top:849.68px;font-size:16.5px;line-height:16.5px;font-weight:400;color:#000;font-family:"Liberation Sans",sans-serif;transform:scaleX(0.9694);transform-origin:0 0;'>06:42:37</div><div class=t style='left:28.70px;top:884.60px;font-size:16.5px;line-height:16.5px;font-weight:400;color:#000;font-family:"Liberation Sans",sans-serif;'>1</div><div class=t style='left:83.57px;top:883.30px;font-size:16.5px;line-height:16.5px;font-weight:400;color:#000;font-family:"Liberation Sans",sans-serif;transform:scaleX(1.0339);transform-origin:0 0;'>SHIM++</div><div class=t style='left:294.04px;top:883.30px;font-size:16.5px;line-height:16.5px;font-weight:400;color:#000;font-family:"Liberation Sans",sans-serif;transform:scaleX(0.9645);transform-origin:0 0;'>06:48:07</div><div class=t style='left:406.13px;top:883.30px;font-size:16.5px;line-height:16.5px;font-weight:400;color:#000;font-family:"Liberation Sans",sans-serif;transform:scaleX(0.9694);transform-origin:0 0;'>06:48:07</div><div class=a style='left:21px;top:912.32px;width:25px;height:28px;background:#b0c4de'></div><div class=a style='left:77px;top:912.32px;width:193px;height:28px;background:#b0c4de'></div><div class=a style='left:287px;top:912.32px;width:95px;height:28px;background:#b0c4de'></div><div class=a style='left:399px;top:912.32px;width:95px;height:28px;background:#b0c4de'></div><div class=t style='left:28.20px;top:918.22px;font-size:16.5px;line-height:16.5px;font-weight:400;color:#000;font-family:"Liberation Sans",sans-serif;'>8</div><div class=t style='left:83.64px;top:916.92px;font-size:16.5px;line-height:16.5px;font-weight:400;color:#000;font-family:"Liberation Sans",sans-serif;transform:scaleX(0.9613);transform-origin:0 0;'>HMBC WALTZ</div><div class=t style='left:294.04px;top:916.92px;font-size:16.5px;line-height:16.5px;font-weight:400;color:#000;font-family:"Liberation Sans",sans-serif;transform:scaleX(0.9645);transform-origin:0 0;'>06:53:37</div><div class=t style='left:406.11px;top:916.92px;font-size:16.5px;line-height:16.5px;font-weight:400;color:#000;font-family:"Liberation Sans",sans-serif;transform:scaleX(0.9852);transform-origin:0 0;'>11:27:13</div><div class=t style='left:28.70px;top:951.84px;font-size:16.5px;line-height:16.5px;font-weight:400;color:#000;font-family:"Liberation Sans",sans-serif;'>1</div><div class=t style='left:83.57px;top:950.54px;font-size:16.5px;line-height:16.5px;font-weight:400;color:#000;font-family:"Liberation Sans",sans-serif;transform:scaleX(1.0339);transform-origin:0 0;'>SHIM++</div><div class=t style='left:294.02px;top:950.54px;font-size:16.5px;line-height:16.5px;font-weight:400;color:#000;font-family:"Liberation Sans",sans-serif;transform:scaleX(0.9803);transform-origin:0 0;'>11:32:43</div><div class=t style='left:406.11px;top:950.54px;font-size:16.5px;line-height:16.5px;font-weight:400;color:#000;font-family:"Liberation Sans",sans-serif;transform:scaleX(0.9852);transform-origin:0 0;'>11:32:43</div><div class=a style='left:542px;top:271px;width:1241px;height:746px;background:linear-gradient(#fefefe 0%,#f5f5f5 44%,#ececea 84.5%,#e3e3e1 100%)'></div><div class=t style='left:553.95px;top:302.40px;font-size:57px;line-height:57px;font-weight:700;color:#0d0708;font-family:"Liberation Sans",sans-serif;transform:scaleX(0.8225);transform-origin:0 0;'>Spins</div><div class=t style='left:712.70px;top:301.20px;font-size:57px;line-height:57px;font-weight:700;color:#0d0708;font-family:"Liberation Sans",sans-serif;transform:scaleX(0.9260);transform-origin:0 0;'>lve</div><svg class=a style='left:670px;top:300px' width=60 height=60 viewBox='670 300 60 60'><path d='M701.43 320.65 A14.1 14.1 0 1 1 694.37 320.65' fill='none' stroke='#0d0708' stroke-width='4.75'/><circle cx='697.9' cy='334.1' r='5.1' fill='#c01f27'/><circle cx='697.9' cy='320.1' r='2.1' fill='#c01f27'/></svg><div class=a style='left:556px;top:374.5px;width:273px;height:2px;background:#7d7d7d'></div><div class=t style='left:555.68px;top:409.10px;font-size:19.5px;line-height:19.5px;font-weight:400;color:#000;font-family:"Liberation Sans",sans-serif;transform:scaleX(0.9583);transform-origin:0 0;'>1D CARBON+ WALTZ</div><div class=a style='left:556px;top:438.5px;width:273px;height:2px;background:#7d7d7d'></div><div class=t style='left:568.81px;top:470.10px;font-size:12.6px;line-height:12.6px;font-weight:400;color:#000;font-family:"Liberation Sans",sans-serif;transform:scaleX(0.8947);transform-origin:0 0;'>SOLVENT</div><div class=t style='left:568.78px;top:499.00px;font-size:12.6px;line-height:12.6px;font-weight:400;color:#000;font-family:"Liberation Sans",sans-serif;transform:scaleX(0.9180);transform-origin:0 0;'>SAMPLE</div><div class=a style='left:668.4px;top:462.4px;width:116px;height:25.1px;background:#fff;border:1px solid #b4b4b4'></div><svg class=a style='left:766px;top:470.4px' width=12 height=8><path d='M1.5 1.5 L5.5 5.5 L9.5 1.5' fill='none' stroke='#a8a8a8' stroke-width='1.3'/></svg><div class=a style='left:788px;top:465px;width:20px;height:19.7px;background:#f0f0f0;border:1px solid #a9a9a9'></div><div class=t style='left:792.84px;top:473.30px;font-size:10px;line-height:10px;font-weight:400;color:#7a7a7a;font-family:"Liberation Sans",sans-serif;transform:scaleX(1.4600);transform-origin:0 0;'>X</div><div class=a style='left:668.4px;top:491.6px;width:116px;height:25.0px;background:#fff;border:1px solid #b4b4b4'></div><svg class=a style='left:766px;top:499.6px' width=12 height=8><path d='M1.5 1.5 L5.5 5.5 L9.5 1.5' fill='none' stroke='#a8a8a8' stroke-width='1.3'/></svg><div class=a style='left:788px;top:494.2px;width:20px;height:19.7px;background:#f0f0f0;border:1px solid #a9a9a9'></div><div class=t style='left:792.84px;top:502.50px;font-size:10px;line-height:10px;font-weight:400;color:#7a7a7a;font-family:"Liberation Sans",sans-serif;transform:scaleX(1.4600);transform-origin:0 0;'>X</div><div class=t style='left:674.47px;top:498.00px;font-size:13px;line-height:13px;font-weight:400;color:#7b7b7b;font-family:"Liberation Sans",sans-serif;transform:scaleX(0.9338);transform-origin:0 0;'>Extrasyn S7</div><div class=a style='left:556px;top:525.4px;width:259px;height:273px;background:#fff;border-top:1px solid #e2e2e2;border-left:1px solid #e2e2e2;border-bottom:1px solid #e2e2e2'></div><div class=t style='left:572.08px;top:541.30px;font-size:12px;line-height:12px;font-weight:400;color:#000;font-family:"Liberation Sans",sans-serif;transform:scaleX(0.9200);transform-origin:0 0;'>SCANS</div><div class=a style='left:701.2px;top:534.3px;width:102.5px;height:24.9px;background:#ececec;border:1px solid #d6d6d6'></div><svg class=a style='left:785px;top:542.3px' width=12 height=8><path d='M2 1.2 L5.5 5.6 L9 1.2' fill='none' stroke='#c2c2c2' stroke-width='1.6'/></svg><div class=t style='left:708.93px;top:541.30px;font-size:12.6px;line-height:12.6px;font-weight:400;color:#000;font-family:"Liberation Sans",sans-serif;transform:scaleX(1.0654);transform-origin:0 0;'>8192</div><div class=t style='left:572.03px;top:577.40px;font-size:12px;line-height:12px;font-weight:400;color:#000;font-family:"Liberation Sans",sans-serif;transform:scaleX(0.9686);transform-origin:0 0;'>REPETITION TIME</div><div class=a style='left:701.2px;top:570.4px;width:102.5px;height:24.9px;background:#ececec;border:1px solid #d6d6d6'></div><svg class=a style='left:785px;top:578.4px' width=12 height=8><path d='M2 1.2 L5.5 5.6 L9 1.2' fill='none' stroke='#c2c2c2' stroke-width='1.6'/></svg><div class=t style='left:710.00px;top:578.00px;font-size:12.6px;line-height:12.6px;font-weight:400;color:#000;font-family:"Liberation Sans",sans-serif;transform:scaleX(0.9688);transform-origin:0 0;'>4 s</div><div class=t style='left:572.06px;top:614.50px;font-size:12px;line-height:12px;font-weight:400;color:#000;font-family:"Liberation Sans",sans-serif;transform:scaleX(0.9407);transform-origin:0 0;'>PULSE ANGLE</div><div class=a style='left:701.2px;top:607.5px;width:102.5px;height:24.9px;background:#ececec;border:1px solid #d6d6d6'></div><svg class=a style='left:785px;top:615.5px' width=12 height=8><path d='M2 1.2 L5.5 5.6 L9 1.2' fill='none' stroke='#c2c2c2' stroke-width='1.6'/></svg><div class=t style='left:710.00px;top:614.50px;font-size:12.6px;line-height:12.6px;font-weight:400;color:#000;font-family:"Liberation Sans",sans-serif;transform:scaleX(1.0385);transform-origin:0 0;'>45</div><div class=t style='left:571.98px;top:651.40px;font-size:12px;line-height:12px;font-weight:400;color:#000;font-family:"Liberation Sans",sans-serif;transform:scaleX(1.0155);transform-origin:0 0;'>BANDWIDTH</div><div class=a style='left:701.2px;top:644.4px;width:102.5px;height:24.9px;background:#ececec;border:1px solid #d6d6d6'></div><svg class=a style='left:785px;top:652.4px' width=12 height=8><path d='M2 1.2 L5.5 5.6 L9 1.2' fill='none' stroke='#c2c2c2' stroke-width='1.6'/></svg><div class=t style='left:708.94px;top:651.40px;font-size:12.6px;line-height:12.6px;font-weight:400;color:#000;font-family:"Liberation Sans",sans-serif;transform:scaleX(1.0553);transform-origin:0 0;'>333 ppm</div><div class=t style='left:572.08px;top:687.40px;font-size:12px;line-height:12px;font-weight:400;color:#000;font-family:"Liberation Sans",sans-serif;transform:scaleX(0.9230);transform-origin:0 0;'>CENTER FREQUENCY</div><div class=a style='left:701.2px;top:680.4px;width:102.5px;height:24.9px;background:#ececec;border:1px solid #d6d6d6'></div><svg class=a style='left:785px;top:688.4px' width=12 height=8><path d='M2 1.2 L5.5 5.6 L9 1.2' fill='none' stroke='#c2c2c2' stroke-width='1.6'/></svg><div class=t style='left:708.92px;top:687.40px;font-size:12.6px;line-height:12.6px;font-weight:400;color:#000;font-family:"Liberation Sans",sans-serif;transform:scaleX(1.0783);transform-origin:0 0;'>110 ppm</div><div class=t style='left:572.02px;top:725.25px;font-size:12px;line-height:12px;font-weight:400;color:#000;font-family:"Liberation Sans",sans-serif;transform:scaleX(0.9769);transform-origin:0 0;'>NOE ENHANCEMENT</div><div class=t style='left:572.05px;top:761.00px;font-size:12px;line-height:12px;font-weight:400;color:#000;font-family:"Liberation Sans",sans-serif;transform:scaleX(0.9530);transform-origin:0 0;'>1H DECOUPLE</div><div class=a style='left:783px;top:721.1px;width:19px;height:18px;background:#ececec;border:1px solid #bdbdbd'></div><svg class=a style='left:783px;top:721.1px' width=19 height=18><path d='M4.2 9.2 L8 13 L15 4.5' fill='none' stroke='#5c5c5c' stroke-width='2.4'/></svg><div class=a style='left:783px;top:757.3px;width:19px;height:18px;background:#ececec;border:1px solid #bdbdbd'></div><svg class=a style='left:783px;top:757.3px' width=19 height=18><path d='M4.2 9.2 L8 13 L15 4.5' fill='none' stroke='#5c5c5c' stroke-width='2.4'/></svg><div class=a style='left:556px;top:812.5px;width:273px;height:2px;background:#737373'></div><div class=a style='left:571.9px;top:828.3px;width:241px;height:14px;border-radius:7px;background:#e2eff0;border:1px solid #c9d3d4'></div><div class=a style='left:572.4px;top:828.8px;width:97px;height:13px;border-radius:6.5px;background:linear-gradient(#c2e4a0,#8cc98a)'></div><div class=t style='left:562.64px;top:851.80px;font-size:9px;line-height:9px;font-weight:400;color:#7a7a7a;font-family:"Liberation Sans",sans-serif;transform:scaleX(0.8630);transform-origin:0 0;'>PROGRESS: 38%</div><div class=t style='left:650.50px;top:851.80px;font-size:9px;line-height:9px;font-weight:400;color:#7a7a7a;font-family:"Liberation Sans",sans-serif;transform:scaleX(0.9344);transform-origin:0 0;'>TIME REMAINING: 5 HOUR, 35 MIN, 13 SEC</div><div class=a style='left:556px;top:874.8px;width:273px;height:2px;background:#969696'></div><div class=a style='left:843px;top:288px;width:923px;height:713px;background:#fff;border:1px solid #000'></div><div class=t style='left:1189.90px;top:314.50px;font-size:21px;line-height:21px;font-weight:400;color:#000;font-family:"Liberation Sans",sans-serif;transform:scaleX(1.1008);transform-origin:0 0;'>Spectrum Scan [3163/8192]</div><svg class=a style='left:0;top:0' width=1920 height=1080 viewBox='0 0 1920 1080' shape-rendering='auto'><line x1='994.5' y1='345' x2='994.5' y2='929' stroke='#e0e0e0' stroke-width='1' stroke-dasharray='2,2'/><line x1='1236.5' y1='345' x2='1236.5' y2='929' stroke='#e0e0e0' stroke-width='1' stroke-dasharray='2,2'/><line x1='1477.5' y1='345' x2='1477.5' y2='929' stroke='#e0e0e0' stroke-width='1' stroke-dasharray='2,2'/><line x1='1720.5' y1='345' x2='1720.5' y2='929' stroke='#e0e0e0' stroke-width='1' stroke-dasharray='2,2'/><line x1='928' y1='439.5' x2='1741' y2='439.5' stroke='#e0e0e0' stroke-width='1' stroke-dasharray='2,2'/><line x1='928' y1='582.5' x2='1741' y2='582.5' stroke='#e0e0e0' stroke-width='1' stroke-dasharray='2,2'/><line x1='928' y1='725.5' x2='1741' y2='725.5' stroke='#e0e0e0' stroke-width='1' stroke-dasharray='2,2'/><line x1='928' y1='868.5' x2='1741' y2='868.5' stroke='#e0e0e0' stroke-width='1' stroke-dasharray='2,2'/><path d='M927.5 725.4 L927.8 728.7 L928.2 722.5 L928.5 725.6 L928.8 731.0 L929.2 727.6 L929.5 719.3 L929.8 730.2 L930.2 719.2 L930.5 719.0 L930.8 727.8 L931.2 726.3 L931.5 727.8 L931.8 728.2 L932.2 728.9 L932.5 731.7 L932.8 725.1 L933.2 726.1 L933.5 724.6 L933.8 722.4 L934.2 723.1 L934.5 727.6 L934.8 726.8 L935.2 732.2 L935.5 726.1 L935.8 723.0 L936.2 720.3 L936.5 730.1 L936.8 732.8 L937.2 728.1 L937.5 729.2 L937.8 724.0 L938.2 722.4 L938.5 724.3 L938.8 720.3 L939.2 727.6 L939.5 718.4 L939.8 715.8 L940.2 721.8 L940.5 730.8 L940.8 727.7 L941.2 728.5 L941.5 728.9 L941.8 729.0 L942.2 730.8 L942.5 728.9 L942.8 730.3 L943.2 718.9 L943.5 721.0 L943.8 733.6 L944.2 728.1 L944.5 729.5 L944.8 731.0 L945.2 724.9 L945.5 725.8 L945.8 728.7 L946.2 722.8 L946.5 720.9 L946.8 732.9 L947.2 724.8 L947.5 722.9 L947.8 729.8 L948.2 731.4 L948.5 726.3 L948.8 731.2 L949.2 730.1 L949.5 725.6 L949.8 725.7 L950.2 719.7 L950.5 718.8 L950.8 730.5 L951.2 730.1 L951.5 725.9 L951.8 729.1 L952.2 720.3 L952.5 727.7 L952.8 730.8 L953.2 725.7 L953.5 727.1 L953.8 723.3 L954.2 729.8 L954.5 722.6 L954.8 727.8 L955.1 732.2 L955.5 721.2 L955.8 722.0 L956.1 727.2 L956.5 731.3 L956.8 720.0 L957.1 727.3 L957.5 724.2 L957.8 727.5 L958.1 729.5 L958.5 720.6 L958.8 728.8 L959.1 728.0 L959.5 714.6 L959.8 736.6 L960.1 732.5 L960.5 730.3 L960.8 727.1 L961.1 722.2 L961.5 723.3 L961.8 733.8 L962.1 718.7 L962.5 733.2 L962.8 728.9 L963.1 728.9 L963.5 732.1 L963.8 733.6 L964.1 724.0 L964.5 731.6 L964.8 733.3 L965.1 726.1 L965.5 719.3 L965.8 730.8 L966.1 727.2 L966.5 730.8 L966.8 727.0 L967.1 731.8 L967.5 724.4 L967.8 731.1 L968.1 718.9 L968.5 731.9 L968.8 726.5 L969.1 727.2 L969.5 735.1 L969.8 727.6 L970.1 726.5 L970.5 722.0 L970.8 720.3 L971.1 724.8 L971.5 727.5 L971.8 730.9 L972.1 720.7 L972.5 724.7 L972.8 723.6 L973.1 724.2 L973.5 722.4 L973.8 729.1 L974.1 724.7 L974.5 719.2 L974.8 717.9 L975.1 723.8 L975.5 730.9 L975.8 730.8 L976.1 733.3 L976.5 730.4 L976.8 731.4 L977.1 733.2 L977.5 736.0 L977.8 720.1 L978.1 723.6 L978.5 730.6 L978.8 730.1 L979.1 731.5 L979.5 728.9 L979.8 731.2 L980.1 723.3 L980.5 726.2 L980.8 724.1 L981.1 724.1 L981.5 730.5 L981.8 716.6 L982.1 735.0 L982.5 729.6 L982.8 719.4 L983.1 732.2 L983.5 733.5 L983.8 735.6 L984.1 729.1 L984.5 728.6 L984.8 737.0 L985.1 732.3 L985.5 735.2 L985.8 732.1 L986.1 724.1 L986.5 729.0 L986.8 727.7 L987.1 730.2 L987.5 729.9 L987.8 729.6 L988.1 726.6 L988.5 731.3 L988.8 725.3 L989.1 728.0 L989.5 728.0 L989.8 728.7 L990.1 729.8 L990.5 732.5 L990.8 729.9 L991.1 723.9 L991.5 724.0 L991.8 731.2 L992.1 723.6 L992.5 734.8 L992.8 724.8 L993.1 730.3 L993.5 734.5 L993.8 731.1 L994.1 735.2 L994.5 732.3 L994.8 727.5 L995.1 731.3 L995.5 730.7 L995.8 732.1 L996.1 733.5 L996.5 727.2 L996.8 732.0 L997.1 731.9 L997.5 726.4 L997.8 725.5 L998.1 729.2 L998.5 726.0 L998.8 726.4 L999.1 734.0 L999.5 729.7 L999.8 726.3 L1000.1 722.2 L1000.5 724.1 L1000.8 727.0 L1001.1 734.1 L1001.5 727.2 L1001.8 723.2 L1002.1 718.9 L1002.5 728.0 L1002.8 728.6 L1003.1 727.6 L1003.5 725.7 L1003.8 717.9 L1004.1 734.2 L1004.5 729.9 L1004.8 727.0 L1005.1 728.8 L1005.5 728.5 L1005.8 731.7 L1006.1 736.7 L1006.5 724.6 L1006.8 728.2 L1007.1 723.5 L1007.5 729.1 L1007.8 735.6 L1008.1 685.0 L1008.5 730.4 L1008.8 728.1 L1009.1 729.7 L1009.4 725.3 L1009.8 726.2 L1010.1 726.8 L1010.4 726.8 L1010.8 730.4 L1011.1 728.1 L1011.4 727.5 L1011.8 725.0 L1012.1 733.9 L1012.4 728.2 L1012.8 724.9 L1013.1 729.1 L1013.4 742.2 L1013.8 728.0 L1014.1 730.0 L1014.4 727.7 L1014.8 728.2 L1015.1 732.5 L1015.4 728.1 L1015.8 730.5 L1016.1 731.5 L1016.4 725.5 L1016.8 726.7 L1017.1 724.5 L1017.4 726.9 L1017.8 730.0 L1018.1 726.2 L1018.4 732.2 L1018.8 735.5 L1019.1 729.0 L1019.4 721.8 L1019.8 734.0 L1020.1 728.8 L1020.4 720.1 L1020.8 725.3 L1021.1 723.3 L1021.4 725.1 L1021.8 730.0 L1022.1 727.6 L1022.4 729.0 L1022.8 732.4 L1023.1 724.7 L1023.4 732.5 L1023.8 726.7 L1024.1 731.9 L1024.4 724.9 L1024.8 730.6 L1025.1 732.4 L1025.4 728.1 L1025.8 722.3 L1026.1 722.1 L1026.4 729.2 L1026.8 733.0 L1027.1 730.8 L1027.4 724.8 L1027.8 729.6 L1028.1 725.4 L1028.4 727.5 L1028.8 726.7 L1029.1 732.2 L1029.4 737.1 L1029.8 729.6 L1030.1 729.3 L1030.4 731.8 L1030.8 724.8 L1031.1 726.6 L1031.4 730.6 L1031.8 720.4 L1032.1 723.8 L1032.4 732.6 L1032.8 732.9 L1033.1 718.1 L1033.4 729.1 L1033.8 720.7 L1034.1 737.3 L1034.4 732.8 L1034.8 723.8 L1035.1 729.4 L1035.4 735.0 L1035.8 737.8 L1036.1 725.9 L1036.4 720.5 L1036.8 728.4 L1037.1 728.2 L1037.4 735.0 L1037.8 730.0 L1038.1 670.0 L1038.4 727.6 L1038.8 725.2 L1039.1 738.2 L1039.4 728.4 L1039.8 728.2 L1040.1 727.7 L1040.4 732.0 L1040.8 723.0 L1041.1 727.4 L1041.4 727.5 L1041.8 727.1 L1042.1 727.2 L1042.4 726.9 L1042.8 724.9 L1043.1 731.9 L1043.4 733.4 L1043.8 731.6 L1044.1 731.4 L1044.4 739.2 L1044.8 728.6 L1045.1 731.3 L1045.4 733.0 L1045.8 726.7 L1046.1 722.7 L1046.4 731.4 L1046.8 725.9 L1047.1 730.1 L1047.4 729.6 L1047.8 728.7 L1048.1 733.4 L1048.4 723.5 L1048.8 726.8 L1049.1 730.6 L1049.4 734.4 L1049.8 729.4 L1050.1 732.2 L1050.4 730.4 L1050.8 732.3 L1051.1 724.5 L1051.4 728.5 L1051.8 724.4 L1052.1 727.3 L1052.4 725.3 L1052.8 724.9 L1053.1 734.4 L1053.4 728.1 L1053.8 734.1 L1054.1 720.5 L1054.4 729.8 L1054.8 733.4 L1055.1 730.3 L1055.4 729.2 L1055.8 727.6 L1056.1 731.2 L1056.4 726.3 L1056.8 731.5 L1057.1 718.2 L1057.4 733.3 L1057.8 732.2 L1058.1 730.3 L1058.4 718.7 L1058.8 727.3 L1059.1 727.9 L1059.4 727.0 L1059.8 725.6 L1060.1 720.6 L1060.4 729.7 L1060.8 725.9 L1061.1 729.4 L1061.4 722.5 L1061.8 728.4 L1062.1 729.1 L1062.4 728.8 L1062.8 716.5 L1063.1 733.9 L1063.4 731.0 L1063.7 731.3 L1064.1 720.5 L1064.4 725.9 L1064.7 726.8 L1065.1 731.0 L1065.4 727.4 L1065.7 732.3 L1066.1 725.8 L1066.4 736.9 L1066.7 727.6 L1067.1 730.9 L1067.4 731.5 L1067.7 722.1 L1068.1 728.7 L1068.4 727.0 L1068.7 731.9 L1069.1 738.3 L1069.4 721.6 L1069.7 733.8 L1070.1 729.3 L1070.4 717.3 L1070.7 725.3 L1071.1 725.4 L1071.4 728.4 L1071.7 730.6 L1072.1 727.7 L1072.4 728.1 L1072.7 728.9 L1073.1 730.9 L1073.4 725.9 L1073.7 727.0 L1074.1 721.6 L1074.4 725.5 L1074.7 725.9 L1075.1 723.2 L1075.4 730.9 L1075.7 726.3 L1076.1 719.9 L1076.4 731.6 L1076.7 729.6 L1077.1 727.2 L1077.4 729.2 L1077.7 723.3 L1078.1 727.7 L1078.4 727.9 L1078.7 728.8 L1079.1 726.3 L1079.4 724.8 L1079.7 727.2 L1080.1 729.1 L1080.4 726.3 L1080.7 730.0 L1081.1 726.6 L1081.4 732.1 L1081.7 726.4 L1082.1 720.1 L1082.4 733.2 L1082.7 731.2 L1083.1 733.5 L1083.4 731.7 L1083.7 720.5 L1084.1 722.9 L1084.4 730.1 L1084.7 727.2 L1085.1 734.0 L1085.4 720.4 L1085.7 724.3 L1086.1 731.3 L1086.4 731.0 L1086.7 725.5 L1087.1 731.2 L1087.4 724.5 L1087.7 723.1 L1088.1 723.3 L1088.4 723.6 L1088.7 727.9 L1089.1 722.3 L1089.4 728.7 L1089.7 728.3 L1090.1 722.1 L1090.4 728.8 L1090.7 733.0 L1091.1 730.4 L1091.4 731.7 L1091.7 728.6 L1092.1 732.4 L1092.4 733.3 L1092.7 728.0 L1093.1 724.3 L1093.4 736.1 L1093.7 724.3 L1094.1 728.3 L1094.4 726.2 L1094.7 731.8 L1095.1 734.5 L1095.4 729.9 L1095.7 730.8 L1096.1 726.4 L1096.4 731.9 L1096.7 727.8 L1097.1 729.1 L1097.4 728.8 L1097.7 725.1 L1098.1 720.7 L1098.4 725.6 L1098.7 721.4 L1099.1 724.8 L1099.4 732.8 L1099.7 726.4 L1100.1 725.5 L1100.4 739.8 L1100.7 727.1 L1101.1 722.1 L1101.4 734.3 L1101.7 729.0 L1102.1 732.3 L1102.4 726.1 L1102.7 727.8 L1103.1 726.7 L1103.4 721.9 L1103.7 728.8 L1104.1 727.5 L1104.4 739.0 L1104.7 721.4 L1105.1 725.8 L1105.4 729.3 L1105.7 729.7 L1106.1 734.3 L1106.4 727.3 L1106.7 728.8 L1107.1 727.5 L1107.4 730.8 L1107.7 716.2 L1108.1 731.1 L1108.4 723.0 L1108.7 721.6 L1109.1 718.9 L1109.4 723.9 L1109.7 728.3 L1110.1 732.0 L1110.4 727.0 L1110.7 728.4 L1111.1 732.1 L1111.4 727.6 L1111.7 724.1 L1112.1 735.1 L1112.4 729.2 L1112.7 734.8 L1113.1 726.9 L1113.4 726.3 L1113.7 721.8 L1114.1 726.7 L1114.4 727.7 L1114.7 723.7 L1115.1 718.7 L1115.4 722.2 L1115.7 725.0 L1116.1 725.9 L1116.4 732.6 L1116.7 727.1 L1117.1 726.0 L1117.4 726.1 L1117.7 716.2 L1118.0 729.3 L1118.4 723.9 L1118.7 722.0 L1119.0 721.7 L1119.4 718.4 L1119.7 728.1 L1120.0 720.1 L1120.4 729.2 L1120.7 727.9 L1121.0 732.3 L1121.4 727.1 L1121.7 727.3 L1122.0 725.2 L1122.4 728.5 L1122.7 724.4 L1123.0 720.8 L1123.4 731.8 L1123.7 728.8 L1124.0 730.3 L1124.4 718.3 L1124.7 735.4 L1125.0 721.2 L1125.4 727.4 L1125.7 727.3 L1126.0 721.2 L1126.4 720.5 L1126.7 728.1 L1127.0 727.7 L1127.4 724.6 L1127.7 730.6 L1128.0 725.1 L1128.4 733.2 L1128.7 731.5 L1129.0 725.4 L1129.4 730.9 L1129.7 727.4 L1130.0 653.3 L1130.4 732.1 L1130.7 727.8 L1131.0 725.1 L1131.4 729.5 L1131.7 726.6 L1132.0 731.6 L1132.4 726.7 L1132.7 728.6 L1133.0 731.2 L1133.4 725.9 L1133.7 736.9 L1134.0 725.0 L1134.4 721.8 L1134.7 733.2 L1135.0 730.3 L1135.4 723.8 L1135.7 723.7 L1136.0 728.0 L1136.4 725.5 L1136.7 727.6 L1137.0 729.9 L1137.4 720.2 L1137.7 732.8 L1138.0 719.6 L1138.4 725.3 L1138.7 724.5 L1139.0 729.8 L1139.4 723.0 L1139.7 720.7 L1140.0 727.5 L1140.4 721.1 L1140.7 729.1 L1141.0 724.6 L1141.4 724.3 L1141.7 718.8 L1142.0 726.8 L1142.4 730.6 L1142.7 725.4 L1143.0 729.2 L1143.4 735.6 L1143.7 733.4 L1144.0 734.4 L1144.4 726.0 L1144.7 728.8 L1145.0 732.6 L1145.4 726.0 L1145.7 727.6 L1146.0 725.1 L1146.4 722.1 L1146.7 730.5 L1147.0 731.4 L1147.4 730.7 L1147.7 724.4 L1148.0 724.2 L1148.4 728.4 L1148.7 727.9 L1149.0 720.3 L1149.4 723.9 L1149.7 723.3 L1150.0 730.6 L1150.4 729.5 L1150.7 724.7 L1151.0 724.6 L1151.4 723.8 L1151.7 723.9 L1152.0 729.5 L1152.4 732.7 L1152.7 715.4 L1153.0 727.8 L1153.4 731.0 L1153.7 733.4 L1154.0 731.6 L1154.4 730.4 L1154.7 720.9 L1155.0 726.6 L1155.4 718.2 L1155.7 732.7 L1156.0 721.4 L1156.4 731.7 L1156.7 726.2 L1157.0 728.3 L1157.4 731.6 L1157.7 727.5 L1158.0 725.1 L1158.4 729.9 L1158.7 732.1 L1159.0 725.3 L1159.4 724.9 L1159.7 729.1 L1160.0 669.0 L1160.4 721.6 L1160.7 728.9 L1161.0 738.2 L1161.4 730.6 L1161.7 720.1 L1162.0 725.2 L1162.4 726.6 L1162.7 729.3 L1163.0 724.6 L1163.4 731.3 L1163.7 728.6 L1164.0 725.2 L1164.4 731.8 L1164.7 729.3 L1165.0 725.9 L1165.4 732.2 L1165.7 730.2 L1166.0 723.5 L1166.4 726.7 L1166.7 727.9 L1167.0 729.1 L1167.4 720.0 L1167.7 723.5 L1168.0 728.1 L1168.4 724.6 L1168.7 722.4 L1169.0 723.3 L1169.4 731.9 L1169.7 724.4 L1170.0 724.6 L1170.4 727.7 L1170.7 726.5 L1171.0 725.7 L1171.4 729.9 L1171.7 723.3 L1172.0 733.1 L1172.3 723.9 L1172.7 722.0 L1173.0 723.5 L1173.3 726.0 L1173.7 722.9 L1174.0 710.6 L1174.3 736.3 L1174.7 723.7 L1175.0 732.5 L1175.3 726.4 L1175.7 711.8 L1176.0 720.5 L1176.3 728.5 L1176.7 725.8 L1177.0 728.9 L1177.3 723.7 L1177.7 734.1 L1178.0 727.0 L1178.3 731.7 L1178.7 726.8 L1179.0 731.7 L1179.3 736.5 L1179.7 727.0 L1180.0 725.7 L1180.3 728.0 L1180.7 735.9 L1181.0 736.2 L1181.3 723.5 L1181.7 731.2 L1182.0 726.3 L1182.3 729.2 L1182.7 720.7 L1183.0 729.1 L1183.3 723.9 L1183.7 726.8 L1184.0 724.7 L1184.3 719.8 L1184.7 724.0 L1185.0 723.5 L1185.3 731.1 L1185.7 724.7 L1186.0 736.7 L1186.3 728.8 L1186.7 725.9 L1187.0 719.8 L1187.3 733.6 L1187.7 728.8 L1188.0 722.9 L1188.3 728.2 L1188.7 722.3 L1189.0 731.3 L1189.3 725.7 L1189.7 722.9 L1190.0 732.3 L1190.3 734.2 L1190.7 719.1 L1191.0 729.7 L1191.3 734.6 L1191.7 728.6 L1192.0 728.6 L1192.3 730.3 L1192.7 723.9 L1193.0 726.2 L1193.3 723.5 L1193.7 733.5 L1194.0 728.4 L1194.3 724.7 L1194.7 723.9 L1195.0 720.3 L1195.3 729.7 L1195.7 728.6 L1196.0 725.1 L1196.3 725.4 L1196.7 736.2 L1197.0 726.1 L1197.3 734.9 L1197.7 726.1 L1198.0 730.4 L1198.3 727.9 L1198.7 729.9 L1199.0 723.7 L1199.3 727.3 L1199.7 735.5 L1200.0 723.8 L1200.3 724.0 L1200.7 733.1 L1201.0 723.3 L1201.3 731.2 L1201.7 723.4 L1202.0 725.2 L1202.3 731.1 L1202.7 722.1 L1203.0 730.4 L1203.3 733.7 L1203.7 736.5 L1204.0 727.8 L1204.3 730.7 L1204.7 735.5 L1205.0 737.8 L1205.3 729.3 L1205.7 723.4 L1206.0 724.2 L1206.3 728.8 L1206.7 732.1 L1207.0 728.0 L1207.3 725.9 L1207.7 725.8 L1208.0 735.1 L1208.3 732.5 L1208.7 720.4 L1209.0 724.1 L1209.3 722.8 L1209.7 729.3 L1210.0 731.3 L1210.3 734.5 L1210.7 724.2 L1211.0 731.5 L1211.3 732.6 L1211.7 728.4 L1212.0 729.1 L1212.3 726.0 L1212.7 727.6 L1213.0 728.4 L1213.3 731.8 L1213.7 724.8 L1214.0 729.3 L1214.3 724.0 L1214.7 733.1 L1215.0 718.5 L1215.3 729.3 L1215.7 731.1 L1216.0 720.4 L1216.3 725.4 L1216.7 729.8 L1217.0 727.7 L1217.3 736.4 L1217.7 735.9 L1218.0 721.7 L1218.3 720.2 L1218.7 726.1 L1219.0 729.3 L1219.3 728.7 L1219.7 729.7 L1220.0 736.1 L1220.3 723.1 L1220.7 730.0 L1221.0 721.9 L1221.3 730.8 L1221.7 729.3 L1222.0 726.9 L1222.3 725.2 L1222.7 731.5 L1223.0 730.8 L1223.3 725.9 L1223.7 728.8 L1224.0 728.2 L1224.3 727.9 L1224.7 738.1 L1225.0 730.7 L1225.3 734.5 L1225.7 721.8 L1226.0 736.6 L1226.3 734.1 L1226.6 724.7 L1227.0 729.6 L1227.3 726.8 L1227.6 726.7 L1228.0 727.2 L1228.3 723.1 L1228.6 728.0 L1229.0 732.8 L1229.3 730.5 L1229.6 725.1 L1230.0 724.6 L1230.3 736.9 L1230.6 737.0 L1231.0 731.6 L1231.3 724.9 L1231.6 728.9 L1232.0 719.7 L1232.3 738.3 L1232.6 731.3 L1233.0 730.4 L1233.3 727.8 L1233.6 724.8 L1234.0 729.7 L1234.3 730.4 L1234.6 719.6 L1235.0 732.1 L1235.3 730.1 L1235.6 730.4 L1236.0 728.9 L1236.3 730.0 L1236.6 724.9 L1237.0 728.4 L1237.3 726.2 L1237.6 720.7 L1238.0 734.7 L1238.3 731.1 L1238.6 735.6 L1239.0 730.9 L1239.3 731.6 L1239.6 724.5 L1240.0 719.6 L1240.3 729.5 L1240.6 730.2 L1241.0 724.6 L1241.3 727.9 L1241.6 728.0 L1242.0 726.0 L1242.3 728.0 L1242.6 730.7 L1243.0 725.3 L1243.3 728.2 L1243.6 726.6 L1244.0 723.0 L1244.3 728.3 L1244.6 739.3 L1245.0 729.6 L1245.3 730.7 L1245.6 730.1 L1246.0 733.6 L1246.3 731.9 L1246.6 723.5 L1247.0 724.8 L1247.3 735.0 L1247.6 733.3 L1248.0 731.6 L1248.3 731.5 L1248.6 731.2 L1249.0 731.1 L1249.3 729.6 L1249.6 726.1 L1250.0 732.1 L1250.3 734.9 L1250.6 720.8 L1251.0 731.9 L1251.3 734.9 L1251.6 725.3 L1252.0 725.6 L1252.3 731.9 L1252.6 734.7 L1253.0 723.8 L1253.3 717.1 L1253.6 726.7 L1254.0 722.5 L1254.3 730.7 L1254.6 732.0 L1255.0 729.8 L1255.3 735.1 L1255.6 736.6 L1256.0 722.6 L1256.3 722.0 L1256.6 733.8 L1257.0 729.1 L1257.3 727.0 L1257.6 733.1 L1258.0 727.7 L1258.3 733.0 L1258.6 726.9 L1259.0 731.3 L1259.3 718.8 L1259.6 721.7 L1260.0 722.5 L1260.3 728.8 L1260.6 730.1 L1261.0 730.3 L1261.3 727.7 L1261.6 729.5 L1262.0 723.3 L1262.3 724.1 L1262.6 726.4 L1263.0 723.0 L1263.3 724.0 L1263.6 728.3 L1264.0 723.4 L1264.3 727.2 L1264.6 722.4 L1265.0 734.4 L1265.3 724.0 L1265.6 727.7 L1266.0 727.9 L1266.3 725.0 L1266.6 726.1 L1267.0 728.0 L1267.3 727.3 L1267.6 725.4 L1268.0 727.3 L1268.3 724.9 L1268.6 724.7 L1269.0 722.1 L1269.3 720.4 L1269.6 726.6 L1270.0 719.9 L1270.3 728.5 L1270.6 726.4 L1271.0 733.6 L1271.3 723.3 L1271.6 725.4 L1272.0 724.0 L1272.3 724.7 L1272.6 726.7 L1273.0 723.8 L1273.3 724.4 L1273.6 729.8 L1274.0 722.6 L1274.3 727.3 L1274.6 730.7 L1275.0 731.7 L1275.3 730.5 L1275.6 725.4 L1276.0 730.0 L1276.3 726.4 L1276.6 728.5 L1277.0 727.2 L1277.3 733.6 L1277.6 723.6 L1278.0 722.0 L1278.3 726.5 L1278.6 723.5 L1279.0 731.6 L1279.3 724.7 L1279.6 722.4 L1280.0 722.6 L1280.3 730.3 L1280.6 731.9 L1280.9 725.9 L1281.3 731.0 L1281.6 726.9 L1281.9 728.8 L1282.3 730.3 L1282.6 724.9 L1282.9 726.8 L1283.3 732.6 L1283.6 715.1 L1283.9 728.9 L1284.3 729.9 L1284.6 728.0 L1284.9 729.5 L1285.3 718.6 L1285.6 737.8 L1285.9 720.5 L1286.3 730.9 L1286.6 730.5 L1286.9 727.0 L1287.3 725.5 L1287.6 724.4 L1287.9 726.2 L1288.3 733.0 L1288.6 722.9 L1288.9 724.8 L1289.3 726.9 L1289.6 724.8 L1289.9 718.9 L1290.3 725.7 L1290.6 727.4 L1290.9 727.0 L1291.3 725.9 L1291.6 722.8 L1291.9 734.3 L1292.3 732.2 L1292.6 722.7 L1292.9 728.1 L1293.3 717.3 L1293.6 721.3 L1293.9 726.7 L1294.3 728.0 L1294.6 723.1 L1294.9 735.2 L1295.3 718.0 L1295.6 720.1 L1295.9 726.9 L1296.3 730.9 L1296.6 723.5 L1296.9 734.8 L1297.3 726.8 L1297.6 729.3 L1297.9 730.2 L1298.3 726.0 L1298.6 722.5 L1298.9 725.7 L1299.3 732.4 L1299.6 732.2 L1299.9 727.9 L1300.3 729.9 L1300.6 724.6 L1300.9 723.2 L1301.3 729.4 L1301.6 728.5 L1301.9 718.9 L1302.3 729.4 L1302.6 722.4 L1302.9 732.1 L1303.3 729.3 L1303.6 736.8 L1303.9 724.4 L1304.3 727.2 L1304.6 731.2 L1304.9 723.2 L1305.3 724.2 L1305.6 724.7 L1305.9 721.2 L1306.3 726.1 L1306.6 721.8 L1306.9 730.7 L1307.3 725.1 L1307.6 727.7 L1307.9 723.8 L1308.3 732.2 L1308.6 723.3 L1308.9 730.4 L1309.3 725.4 L1309.6 729.4 L1309.9 725.6 L1310.3 730.8 L1310.6 732.8 L1310.9 720.8 L1311.3 732.9 L1311.6 727.7 L1311.9 721.1 L1312.3 729.8 L1312.6 728.8 L1312.9 723.2 L1313.3 733.6 L1313.6 732.8 L1313.9 727.7 L1314.3 726.8 L1314.6 725.1 L1314.9 730.5 L1315.3 724.8 L1315.6 724.4 L1315.9 725.8 L1316.3 723.3 L1316.6 726.4 L1316.9 726.7 L1317.3 726.2 L1317.6 727.7 L1317.9 729.6 L1318.3 727.5 L1318.6 728.9 L1318.9 735.7 L1319.3 725.0 L1319.6 722.5 L1319.9 726.2 L1320.3 728.3 L1320.6 732.5 L1320.9 723.7 L1321.3 723.2 L1321.6 723.1 L1321.9 721.9 L1322.3 728.8 L1322.6 726.6 L1322.9 725.3 L1323.3 726.2 L1323.6 731.9 L1323.9 723.4 L1324.3 725.7 L1324.6 724.1 L1324.9 728.1 L1325.3 724.8 L1325.6 720.4 L1325.9 721.9 L1326.3 726.1 L1326.6 723.8 L1326.9 735.1 L1327.3 722.6 L1327.6 733.4 L1327.9 729.7 L1328.3 732.2 L1328.6 727.4 L1328.9 718.5 L1329.3 724.7 L1329.6 728.9 L1329.9 728.8 L1330.3 732.9 L1330.6 724.4 L1330.9 730.9 L1331.3 727.2 L1331.6 726.9 L1331.9 732.6 L1332.3 730.1 L1332.6 730.5 L1332.9 729.8 L1333.3 726.1 L1333.6 726.5 L1333.9 719.7 L1334.2 719.5 L1334.6 726.8 L1334.9 729.1 L1335.2 728.6 L1335.6 723.7 L1335.9 732.3 L1336.2 718.6 L1336.6 730.2 L1336.9 720.5 L1337.2 728.5 L1337.6 723.4 L1337.9 721.2 L1338.2 732.7 L1338.6 636.8 L1338.9 724.3 L1339.2 735.4 L1339.6 721.0 L1339.9 728.8 L1340.2 729.9 L1340.6 725.9 L1340.9 724.5 L1341.2 727.9 L1341.6 727.5 L1341.9 726.8 L1342.2 726.6 L1342.6 727.9 L1342.9 722.5 L1343.2 722.4 L1343.6 726.5 L1343.9 722.9 L1344.2 720.0 L1344.6 725.6 L1344.9 731.4 L1345.2 727.6 L1345.6 728.7 L1345.9 628.5 L1346.2 725.3 L1346.6 732.8 L1346.9 725.6 L1347.2 724.4 L1347.6 721.7 L1347.9 731.7 L1348.2 725.6 L1348.6 722.1 L1348.9 734.5 L1349.2 725.0 L1349.6 722.8 L1349.9 723.1 L1350.2 731.2 L1350.6 723.1 L1350.9 725.4 L1351.2 731.3 L1351.6 723.7 L1351.9 727.1 L1352.2 729.1 L1352.6 721.7 L1352.9 727.5 L1353.2 731.1 L1353.6 636.8 L1353.9 725.8 L1354.2 728.1 L1354.6 720.7 L1354.9 725.1 L1355.2 734.1 L1355.6 726.8 L1355.9 725.2 L1356.2 728.9 L1356.6 727.6 L1356.9 725.0 L1357.2 727.6 L1357.6 731.4 L1357.9 728.2 L1358.2 730.9 L1358.6 731.9 L1358.9 723.5 L1359.2 734.9 L1359.6 723.1 L1359.9 723.4 L1360.2 733.5 L1360.6 730.4 L1360.9 730.3 L1361.2 727.2 L1361.6 726.2 L1361.9 720.1 L1362.2 725.1 L1362.6 726.0 L1362.9 724.5 L1363.2 730.5 L1363.6 722.7 L1363.9 733.5 L1364.2 732.5 L1364.6 725.9 L1364.9 733.9 L1365.2 731.3 L1365.6 723.8 L1365.9 728.3 L1366.2 727.4 L1366.6 718.9 L1366.9 727.5 L1367.2 730.9 L1367.6 734.9 L1367.9 725.1 L1368.2 728.0 L1368.6 731.8 L1368.9 723.4 L1369.2 729.6 L1369.6 736.6 L1369.9 729.7 L1370.2 731.3 L1370.6 731.0 L1370.9 730.3 L1371.2 718.0 L1371.6 659.0 L1371.9 726.1 L1372.2 724.8 L1372.6 727.4 L1372.9 733.4 L1373.2 728.9 L1373.6 727.8 L1373.9 733.0 L1374.2 722.5 L1374.6 725.6 L1374.9 730.5 L1375.2 733.9 L1375.6 725.4 L1375.9 727.6 L1376.2 722.8 L1376.6 723.7 L1376.9 726.5 L1377.2 722.2 L1377.6 739.4 L1377.9 728.1 L1378.2 731.1 L1378.6 736.7 L1378.9 728.4 L1379.2 724.7 L1379.6 726.5 L1379.9 726.8 L1380.2 731.5 L1380.6 731.6 L1380.9 726.5 L1381.2 730.4 L1381.6 729.4 L1381.9 723.4 L1382.2 733.9 L1382.6 732.6 L1382.9 730.1 L1383.2 728.1 L1383.6 729.0 L1383.9 727.3 L1384.2 725.2 L1384.6 721.3 L1384.9 723.0 L1385.2 727.0 L1385.6 717.2 L1385.9 731.4 L1386.2 720.0 L1386.6 730.2 L1386.9 733.1 L1387.2 730.8 L1387.6 726.8 L1387.9 725.6 L1388.2 724.7 L1388.5 732.4 L1388.9 729.8 L1389.2 725.7 L1389.5 732.6 L1389.9 727.6 L1390.2 728.4 L1390.5 729.7 L1390.9 728.2 L1391.2 727.4 L1391.5 730.0 L1391.9 728.5 L1392.2 726.4 L1392.5 722.7 L1392.9 726.9 L1393.2 725.2 L1393.5 726.0 L1393.9 726.6 L1394.2 721.3 L1394.5 730.0 L1394.9 716.6 L1395.2 718.2 L1395.5 732.3 L1395.9 732.7 L1396.2 717.4 L1396.5 718.7 L1396.9 735.4 L1397.2 732.3 L1397.5 732.1 L1397.9 728.1 L1398.2 734.3 L1398.5 734.2 L1398.9 722.3 L1399.2 724.4 L1399.5 733.9 L1399.9 730.6 L1400.2 737.7 L1400.5 730.2 L1400.9 735.8 L1401.2 736.2 L1401.5 729.2 L1401.9 726.6 L1402.2 730.9 L1402.5 724.0 L1402.9 732.9 L1403.2 735.2 L1403.5 729.3 L1403.9 726.4 L1404.2 732.5 L1404.5 716.3 L1404.9 728.6 L1405.2 735.2 L1405.5 725.5 L1405.9 722.3 L1406.2 730.2 L1406.5 724.6 L1406.9 725.8 L1407.2 730.7 L1407.5 737.1 L1407.9 730.3 L1408.2 726.4 L1408.5 728.2 L1408.9 729.4 L1409.2 738.0 L1409.5 729.1 L1409.9 730.6 L1410.2 730.0 L1410.5 723.4 L1410.9 736.6 L1411.2 729.6 L1411.5 728.4 L1411.9 728.1 L1412.2 727.4 L1412.5 726.7 L1412.9 729.4 L1413.2 724.9 L1413.5 736.6 L1413.9 731.5 L1414.2 731.9 L1414.5 732.7 L1414.9 734.1 L1415.2 725.4 L1415.5 732.5 L1415.9 730.9 L1416.2 739.5 L1416.5 728.1 L1416.9 731.1 L1417.2 733.4 L1417.5 729.9 L1417.9 728.1 L1418.2 729.0 L1418.5 723.3 L1418.9 727.0 L1419.2 733.3 L1419.5 723.6 L1419.9 718.4 L1420.2 734.1 L1420.5 726.4 L1420.9 737.5 L1421.2 726.8 L1421.5 715.4 L1421.9 733.6 L1422.2 731.6 L1422.5 723.9 L1422.9 731.5 L1423.2 726.1 L1423.5 724.3 L1423.9 725.5 L1424.2 724.6 L1424.5 722.6 L1424.9 733.9 L1425.2 727.5 L1425.5 729.6 L1425.9 724.1 L1426.2 721.6 L1426.5 723.4 L1426.9 720.0 L1427.2 733.0 L1427.5 721.2 L1427.9 713.4 L1428.2 721.2 L1428.5 726.5 L1428.9 730.6 L1429.2 727.2 L1429.5 726.2 L1429.9 736.3 L1430.2 725.6 L1430.5 726.5 L1430.9 732.0 L1431.2 722.7 L1431.5 731.9 L1431.9 725.6 L1432.2 723.8 L1432.5 727.7 L1432.9 731.8 L1433.2 723.7 L1433.5 723.1 L1433.9 730.5 L1434.2 728.3 L1434.5 724.5 L1434.9 724.6 L1435.2 728.1 L1435.5 728.2 L1435.9 726.3 L1436.2 733.3 L1436.5 727.8 L1436.9 732.8 L1437.2 730.1 L1437.5 729.4 L1437.9 730.1 L1438.2 718.7 L1438.5 735.1 L1438.9 730.0 L1439.2 725.6 L1439.5 726.1 L1439.9 732.2 L1440.2 732.5 L1440.5 726.7 L1440.9 727.3 L1441.2 732.2 L1441.5 730.3 L1441.9 733.8 L1442.2 725.6 L1442.5 718.8 L1442.8 724.1 L1443.2 730.7 L1443.5 727.9 L1443.8 659.7 L1444.2 733.4 L1444.5 734.3 L1444.8 729.6 L1445.2 728.3 L1445.5 725.8 L1445.8 728.8 L1446.2 726.1 L1446.5 726.6 L1446.8 727.4 L1447.2 726.5 L1447.5 728.1 L1447.8 714.8 L1448.2 720.2 L1448.5 730.3 L1448.8 665.0 L1449.2 731.5 L1449.5 730.0 L1449.8 720.8 L1450.2 733.3 L1450.5 727.9 L1450.8 732.0 L1451.2 727.0 L1451.5 729.9 L1451.8 733.5 L1452.2 725.2 L1452.5 731.3 L1452.8 726.1 L1453.2 717.5 L1453.5 721.8 L1453.8 726.2 L1454.2 730.8 L1454.5 725.8 L1454.8 720.2 L1455.2 732.0 L1455.5 725.8 L1455.8 722.0 L1456.2 730.1 L1456.5 732.8 L1456.8 730.2 L1457.2 720.5 L1457.5 724.7 L1457.8 726.0 L1458.2 724.4 L1458.5 733.4 L1458.8 735.2 L1459.2 733.8 L1459.5 731.8 L1459.8 725.7 L1460.2 724.7 L1460.5 728.3 L1460.8 728.7 L1461.2 729.3 L1461.5 724.4 L1461.8 725.2 L1462.2 732.5 L1462.5 723.7 L1462.8 734.8 L1463.2 731.7 L1463.5 726.9 L1463.8 725.5 L1464.2 725.0 L1464.5 720.6 L1464.8 728.9 L1465.2 733.4 L1465.5 732.7 L1465.8 737.5 L1466.2 727.1 L1466.5 723.2 L1466.8 733.2 L1467.2 731.4 L1467.5 730.0 L1467.8 725.5 L1468.2 726.8 L1468.5 733.8 L1468.8 722.1 L1469.2 732.9 L1469.5 728.4 L1469.8 733.1 L1470.2 725.1 L1470.5 724.1 L1470.8 728.2 L1471.2 728.0 L1471.5 723.6 L1471.8 731.6 L1472.2 730.2 L1472.5 726.0 L1472.8 727.4 L1473.2 725.7 L1473.5 725.3 L1473.8 722.6 L1474.2 731.6 L1474.5 730.7 L1474.8 725.7 L1475.2 724.6 L1475.5 727.3 L1475.8 730.8 L1476.2 656.4 L1476.5 724.5 L1476.8 727.5 L1477.2 725.1 L1477.5 729.1 L1477.8 729.2 L1478.2 729.3 L1478.5 727.5 L1478.8 726.5 L1479.2 728.4 L1479.5 721.5 L1479.8 726.9 L1480.2 724.4 L1480.5 722.8 L1480.8 730.1 L1481.2 731.8 L1481.5 729.7 L1481.8 728.3 L1482.2 720.2 L1482.5 716.9 L1482.8 719.7 L1483.2 724.0 L1483.5 719.5 L1483.8 717.4 L1484.2 729.1 L1484.5 723.1 L1484.8 729.1 L1485.2 726.1 L1485.5 720.3 L1485.8 728.6 L1486.2 729.0 L1486.5 741.4 L1486.8 724.5 L1487.2 719.3 L1487.5 726.9 L1487.8 724.9 L1488.2 724.6 L1488.5 727.2 L1488.8 724.9 L1489.2 732.6 L1489.5 736.2 L1489.8 732.0 L1490.2 732.7 L1490.5 726.4 L1490.8 718.6 L1491.2 719.3 L1491.5 729.8 L1491.8 723.3 L1492.2 737.1 L1492.5 735.1 L1492.8 734.2 L1493.2 728.3 L1493.5 724.0 L1493.8 727.0 L1494.2 731.6 L1494.5 725.6 L1494.8 722.5 L1495.2 722.4 L1495.5 717.2 L1495.8 731.9 L1496.2 729.8 L1496.5 719.8 L1496.8 729.4 L1497.1 735.0 L1497.5 723.9 L1497.8 725.8 L1498.1 728.9 L1498.5 722.8 L1498.8 729.5 L1499.1 729.3 L1499.5 726.4 L1499.8 723.4 L1500.1 725.8 L1500.5 720.0 L1500.8 733.0 L1501.1 728.1 L1501.5 728.6 L1501.8 734.6 L1502.1 719.1 L1502.5 731.9 L1502.8 721.2 L1503.1 725.3 L1503.5 725.7 L1503.8 720.7 L1504.1 724.0 L1504.5 733.5 L1504.8 725.8 L1505.1 731.3 L1505.5 731.9 L1505.8 722.7 L1506.1 726.2 L1506.5 724.2 L1506.8 732.9 L1507.1 727.0 L1507.5 725.1 L1507.8 726.2 L1508.1 725.7 L1508.5 729.6 L1508.8 729.3 L1509.1 729.9 L1509.5 731.3 L1509.8 726.0 L1510.1 726.6 L1510.5 730.2 L1510.8 735.4 L1511.1 729.2 L1511.5 731.6 L1511.8 726.9 L1512.1 733.9 L1512.5 725.0 L1512.8 727.5 L1513.1 714.9 L1513.5 727.0 L1513.8 646.0 L1514.1 733.8 L1514.5 717.6 L1514.8 724.7 L1515.1 729.9 L1515.5 727.9 L1515.8 731.3 L1516.1 723.4 L1516.5 722.3 L1516.8 731.6 L1517.1 720.6 L1517.5 727.5 L1517.8 724.8 L1518.1 722.8 L1518.5 724.5 L1518.8 726.9 L1519.1 722.1 L1519.5 726.5 L1519.8 729.9 L1520.1 727.5 L1520.5 729.1 L1520.8 723.0 L1521.1 725.7 L1521.5 722.3 L1521.8 730.0 L1522.1 729.8 L1522.5 725.4 L1522.8 723.1 L1523.1 735.5 L1523.5 725.5 L1523.8 720.2 L1524.1 721.8 L1524.5 729.0 L1524.8 725.5 L1525.1 726.5 L1525.5 724.5 L1525.8 728.7 L1526.1 664.0 L1526.5 722.2 L1526.8 734.0 L1527.1 726.3 L1527.5 722.2 L1527.8 728.2 L1528.1 733.0 L1528.5 732.3 L1528.8 726.8 L1529.1 728.3 L1529.5 733.5 L1529.8 728.1 L1530.1 724.9 L1530.5 726.9 L1530.8 728.9 L1531.1 736.5 L1531.5 724.9 L1531.8 721.5 L1532.1 719.7 L1532.5 725.0 L1532.8 719.6 L1533.1 719.5 L1533.5 721.0 L1533.8 718.6 L1534.1 723.0 L1534.5 724.6 L1534.8 726.6 L1535.1 719.8 L1535.5 728.7 L1535.8 732.5 L1536.1 726.0 L1536.5 722.2 L1536.8 725.7 L1537.1 737.1 L1537.5 722.5 L1537.8 719.4 L1538.1 724.1 L1538.5 720.9 L1538.8 723.7 L1539.1 728.2 L1539.5 662.0 L1539.8 726.7 L1540.1 728.8 L1540.5 731.2 L1540.8 725.7 L1541.1 730.9 L1541.5 728.4 L1541.8 726.9 L1542.1 733.2 L1542.5 735.7 L1542.8 725.3 L1543.1 648.5 L1543.5 725.6 L1543.8 735.2 L1544.1 731.3 L1544.5 728.8 L1544.8 720.2 L1545.1 727.4 L1545.5 718.9 L1545.8 734.1 L1546.1 728.1 L1546.5 724.4 L1546.8 730.7 L1547.1 727.1 L1547.5 721.8 L1547.8 723.7 L1548.1 725.7 L1548.5 726.7 L1548.8 720.6 L1549.1 663.4 L1549.5 720.0 L1549.8 721.4 L1550.1 734.0 L1550.5 725.3 L1550.8 730.5 L1551.1 730.4 L1551.4 664.0 L1551.8 723.5 L1552.1 732.3 L1552.4 725.9 L1552.8 735.1 L1553.1 726.9 L1553.4 724.8 L1553.8 728.7 L1554.1 729.0 L1554.4 735.1 L1554.8 728.7 L1555.1 728.0 L1555.4 724.6 L1555.8 729.9 L1556.1 724.4 L1556.4 719.9 L1556.8 718.2 L1557.1 732.0 L1557.4 731.0 L1557.8 722.0 L1558.1 729.0 L1558.4 726.0 L1558.8 728.1 L1559.1 723.3 L1559.4 728.3 L1559.8 727.9 L1560.1 733.8 L1560.4 733.5 L1560.8 734.9 L1561.1 728.5 L1561.4 740.2 L1561.8 729.5 L1562.1 719.8 L1562.4 729.5 L1562.8 728.1 L1563.1 729.0 L1563.4 728.0 L1563.8 728.9 L1564.1 734.0 L1564.4 730.6 L1564.8 726.1 L1565.1 727.8 L1565.4 586.0 L1565.8 730.8 L1566.1 734.9 L1566.4 733.7 L1566.8 732.4 L1567.1 736.2 L1567.4 727.9 L1567.8 721.8 L1568.1 727.7 L1568.4 729.1 L1568.8 728.5 L1569.1 727.4 L1569.4 728.2 L1569.8 731.6 L1570.1 721.0 L1570.4 726.2 L1570.8 725.5 L1571.1 733.2 L1571.4 727.1 L1571.8 726.9 L1572.1 719.6 L1572.4 725.5 L1572.8 730.7 L1573.1 718.6 L1573.4 715.4 L1573.8 725.0 L1574.1 721.3 L1574.4 737.7 L1574.8 727.0 L1575.1 728.4 L1575.4 720.9 L1575.8 734.5 L1576.1 730.6 L1576.4 734.6 L1576.8 724.0 L1577.1 727.2 L1577.4 731.3 L1577.8 728.7 L1578.1 727.2 L1578.4 733.5 L1578.8 737.0 L1579.1 723.0 L1579.4 723.1 L1579.8 728.4 L1580.1 727.5 L1580.4 724.3 L1580.8 718.5 L1581.1 729.6 L1581.4 723.1 L1581.8 725.8 L1582.1 733.8 L1582.4 730.7 L1582.8 665.0 L1583.1 718.4 L1583.4 725.8 L1583.8 724.1 L1584.1 717.8 L1584.4 726.1 L1584.8 737.4 L1585.1 725.5 L1585.4 715.6 L1585.8 725.7 L1586.1 722.2 L1586.4 728.3 L1586.8 731.6 L1587.1 729.1 L1587.4 731.5 L1587.8 723.0 L1588.1 724.9 L1588.4 727.8 L1588.8 729.8 L1589.1 726.8 L1589.4 730.2 L1589.8 734.8 L1590.1 727.1 L1590.4 729.2 L1590.8 730.1 L1591.1 726.6 L1591.4 724.0 L1591.8 732.0 L1592.1 726.8 L1592.4 729.9 L1592.8 725.7 L1593.1 721.5 L1593.4 725.4 L1593.8 729.7 L1594.1 722.2 L1594.4 733.1 L1594.8 729.8 L1595.1 728.4 L1595.4 672.5 L1595.8 727.5 L1596.1 731.7 L1596.4 725.1 L1596.8 732.7 L1597.1 728.1 L1597.4 724.3 L1597.8 735.0 L1598.1 721.7 L1598.4 729.4 L1598.8 728.0 L1599.1 729.1 L1599.4 720.1 L1599.8 728.4 L1600.1 729.0 L1600.4 726.1 L1600.8 731.0 L1601.1 732.7 L1601.4 732.0 L1601.8 666.8 L1602.1 729.4 L1602.4 731.1 L1602.8 729.5 L1603.1 728.8 L1603.4 732.4 L1603.8 725.5 L1604.1 728.8 L1604.4 732.3 L1604.8 726.7 L1605.1 733.4 L1605.4 730.3 L1605.7 732.4 L1606.1 731.4 L1606.4 729.0 L1606.7 726.3 L1607.1 731.3 L1607.4 730.5 L1607.7 727.1 L1608.1 723.8 L1608.4 723.0 L1608.7 722.9 L1609.1 728.1 L1609.4 727.5 L1609.7 727.3 L1610.1 726.5 L1610.4 731.4 L1610.7 726.0 L1611.1 725.0 L1611.4 723.3 L1611.7 721.8 L1612.1 651.0 L1612.4 725.9 L1612.7 739.9 L1613.1 727.4 L1613.4 731.1 L1613.7 730.5 L1614.1 732.0 L1614.4 722.6 L1614.7 734.5 L1615.1 730.7 L1615.4 737.6 L1615.7 725.7 L1616.1 735.5 L1616.4 728.5 L1616.7 727.4 L1617.1 727.0 L1617.4 723.1 L1617.7 665.5 L1618.1 726.3 L1618.4 723.1 L1618.7 729.3 L1619.1 725.2 L1619.4 727.1 L1619.7 730.7 L1620.1 728.4 L1620.4 730.6 L1620.7 732.3 L1621.1 729.2 L1621.4 725.2 L1621.7 732.5 L1622.1 734.1 L1622.4 732.2 L1622.7 731.0 L1623.1 729.7 L1623.4 727.4 L1623.7 729.4 L1624.1 729.6 L1624.4 724.9 L1624.7 722.6 L1625.1 723.0 L1625.4 653.8 L1625.7 722.9 L1626.1 727.6 L1626.4 728.2 L1626.7 732.5 L1627.1 725.5 L1627.4 724.8 L1627.7 731.2 L1628.1 722.3 L1628.4 729.2 L1628.7 732.0 L1629.1 659.7 L1629.4 734.4 L1629.7 724.5 L1630.1 729.1 L1630.4 737.9 L1630.7 734.3 L1631.1 733.0 L1631.4 733.5 L1631.7 724.5 L1632.1 731.6 L1632.4 722.5 L1632.7 721.4 L1633.1 732.6 L1633.4 724.2 L1633.7 724.4 L1634.1 729.2 L1634.4 728.3 L1634.7 724.4 L1635.1 724.8 L1635.4 721.4 L1635.7 725.6 L1636.1 725.5 L1636.4 728.1 L1636.7 733.8 L1637.1 731.7 L1637.4 723.0 L1637.7 721.9 L1638.1 729.8 L1638.4 732.6 L1638.7 724.5 L1639.1 735.6 L1639.4 729.4 L1639.7 728.0 L1640.1 730.6 L1640.4 728.7 L1640.7 724.9 L1641.1 730.4 L1641.4 729.5 L1641.7 725.9 L1642.1 730.8 L1642.4 723.0 L1642.7 736.4 L1643.1 729.2 L1643.4 728.4 L1643.7 730.5 L1644.1 725.0 L1644.4 717.6 L1644.7 719.9 L1645.1 730.2 L1645.4 724.0 L1645.7 727.2 L1646.1 729.3 L1646.4 732.2 L1646.7 734.0 L1647.1 730.1 L1647.4 722.2 L1647.7 727.1 L1648.1 728.0 L1648.4 730.3 L1648.7 723.7 L1649.1 723.9 L1649.4 727.2 L1649.7 732.8 L1650.1 728.4 L1650.4 725.0 L1650.7 728.5 L1651.1 736.8 L1651.4 727.4 L1651.7 723.8 L1652.1 728.5 L1652.4 725.3 L1652.7 720.2 L1653.1 725.0 L1653.4 734.5 L1653.7 726.1 L1654.1 730.4 L1654.4 727.6 L1654.7 728.6 L1655.1 725.8 L1655.4 719.0 L1655.7 679.0 L1656.1 729.1 L1656.4 726.0 L1656.7 728.1 L1657.1 719.5 L1657.4 730.1 L1657.7 726.0 L1658.1 722.3 L1658.4 726.9 L1658.7 728.7 L1659.1 729.4 L1659.4 726.3 L1659.7 725.9 L1660.0 726.8 L1660.4 722.7 L1660.7 720.3 L1661.0 724.9 L1661.4 727.0 L1661.7 727.2 L1662.0 650.0 L1662.4 720.7 L1662.7 726.0 L1663.0 723.8 L1663.4 724.6 L1663.7 729.6 L1664.0 720.9 L1664.4 722.0 L1664.7 728.6 L1665.0 733.6 L1665.4 724.7 L1665.7 730.3 L1666.0 734.4 L1666.4 729.4 L1666.7 734.4 L1667.0 718.5 L1667.4 727.6 L1667.7 732.2 L1668.0 728.0 L1668.4 733.0 L1668.7 726.2 L1669.0 730.9 L1669.4 721.8 L1669.7 730.2 L1670.0 727.1 L1670.4 727.0 L1670.7 728.3 L1671.0 727.5 L1671.4 730.7 L1671.7 725.1 L1672.0 732.6 L1672.4 727.6 L1672.7 726.7 L1673.0 727.7 L1673.4 721.4 L1673.7 726.1 L1674.0 725.8 L1674.4 729.1 L1674.7 729.9 L1675.0 723.5 L1675.4 728.3 L1675.7 726.2 L1676.0 725.6 L1676.4 723.7 L1676.7 733.6 L1677.0 730.6 L1677.4 723.0 L1677.7 733.4 L1678.0 716.8 L1678.4 719.9 L1678.7 728.5 L1679.0 725.8 L1679.4 728.0 L1679.7 727.6 L1680.0 726.2 L1680.4 725.4 L1680.7 726.8 L1681.0 724.9 L1681.4 731.3 L1681.7 731.0 L1682.0 723.1 L1682.4 730.5 L1682.7 720.8 L1683.0 714.6 L1683.4 717.9 L1683.7 726.1 L1684.0 726.9 L1684.4 728.1 L1684.7 731.9 L1685.0 730.8 L1685.4 721.9 L1685.7 725.8 L1686.0 726.3 L1686.4 728.1 L1686.7 729.9 L1687.0 732.8 L1687.4 731.2 L1687.7 719.8 L1688.0 734.3 L1688.4 725.5 L1688.7 725.3 L1689.0 731.8 L1689.4 726.3 L1689.7 726.6 L1690.0 726.0 L1690.4 720.8 L1690.7 732.2 L1691.0 732.8 L1691.4 727.3 L1691.7 725.3 L1692.0 726.0 L1692.4 733.4 L1692.7 721.7 L1693.0 727.6 L1693.4 731.2 L1693.7 729.2 L1694.0 730.3 L1694.4 724.3 L1694.7 721.1 L1695.0 725.6 L1695.4 725.5 L1695.7 728.7 L1696.0 725.1 L1696.4 727.4 L1696.7 734.5 L1697.0 734.7 L1697.4 718.1 L1697.7 720.9 L1698.0 727.9 L1698.4 721.9 L1698.7 720.4 L1699.0 730.9 L1699.4 723.2 L1699.7 727.9 L1700.0 729.2 L1700.4 723.9 L1700.7 712.3 L1701.0 723.6 L1701.4 730.1 L1701.7 724.3 L1702.0 727.3 L1702.4 725.2 L1702.7 730.8 L1703.0 722.4 L1703.4 723.8 L1703.7 721.5 L1704.0 727.4 L1704.4 724.0 L1704.7 729.9 L1705.0 726.1 L1705.4 722.6 L1705.7 723.6 L1706.0 722.7 L1706.4 733.8 L1706.7 728.5 L1707.0 725.0 L1707.4 720.2 L1707.7 730.0 L1708.0 724.2 L1708.4 724.6 L1708.7 722.6 L1709.0 728.0 L1709.4 734.1 L1709.7 724.5 L1710.0 723.7 L1710.4 732.4 L1710.7 725.6 L1711.0 725.7 L1711.4 731.7 L1711.7 727.5 L1712.0 722.8 L1712.4 726.4 L1712.7 732.4 L1713.0 734.2 L1713.4 727.4 L1713.7 726.1 L1714.0 726.1 L1714.3 716.4 L1714.7 726.9 L1715.0 728.3 L1715.3 733.4 L1715.7 727.5 L1716.0 731.1 L1716.3 728.3 L1716.7 725.4 L1717.0 733.9 L1717.3 725.4 L1717.7 731.5 L1718.0 727.8 L1718.3 722.0 L1718.7 721.7 L1719.0 726.0 L1719.3 728.3 L1719.7 723.5 L1720.0 732.5 L1720.3 728.9 L1720.7 728.4 L1721.0 727.3 L1721.3 728.7 L1721.7 722.7 L1722.0 729.2 L1722.3 722.4 L1722.7 718.5 L1723.0 728.3 L1723.3 720.9 L1723.7 720.0 L1724.0 720.2 L1724.3 727.2 L1724.7 726.2 L1725.0 722.5 L1725.3 722.0 L1725.7 733.9 L1726.0 729.0 L1726.3 725.8 L1726.7 724.4 L1727.0 732.7 L1727.3 723.6 L1727.7 722.4 L1728.0 731.9 L1728.3 724.8 L1728.7 723.5 L1729.0 729.3 L1729.3 726.5 L1729.7 729.8 L1730.0 726.7 L1730.3 732.5 L1730.7 727.0 L1731.0 719.7 L1731.3 724.0 L1731.7 716.7 L1732.0 723.9 L1732.3 718.8 L1732.7 727.3 L1733.0 730.8 L1733.3 729.1 L1733.7 726.8 L1734.0 726.5 L1734.3 720.7 L1734.7 733.1 L1735.0 732.7 L1735.3 721.7 L1735.7 726.2 L1736.0 727.8 L1736.3 730.0 L1736.7 728.3 L1737.0 721.9 L1737.3 726.8 L1737.7 724.8 L1738.0 721.2 L1738.3 724.4 L1738.7 733.0 L1739.0 734.9 L1739.3 729.4 L1739.7 720.2 L1740.0 722.0 L1740.3 722.1 L1740.7 733.9 L1741.0 722.5' fill='none' stroke='#0000ff' stroke-width='1.15' stroke-linejoin='round'/><rect x='927.5' y='344.5' width='814' height='585' fill='none' stroke='#000' stroke-width='1'/><line x1='923' y1='925.5' x2='927' y2='925.5' stroke='#000' stroke-width='1'/><line x1='923' y1='897.5' x2='927' y2='897.5' stroke='#000' stroke-width='1'/><line x1='919' y1='868.5' x2='927' y2='868.5' stroke='#000' stroke-width='1'/><line x1='923' y1='839.5' x2='927' y2='839.5' stroke='#000' stroke-width='1'/><line x1='923' y1='811.5' x2='927' y2='811.5' stroke='#000' stroke-width='1'/><line x1='923' y1='782.5' x2='927' y2='782.5' stroke='#000' stroke-width='1'/><line x1='923' y1='754.5' x2='927' y2='754.5' stroke='#000' stroke-width='1'/><line x1='919' y1='725.5' x2='927' y2='725.5' stroke='#000' stroke-width='1'/><line x1='923' y1='696.5' x2='927' y2='696.5' stroke='#000' stroke-width='1'/><line x1='923' y1='668.5' x2='927' y2='668.5' stroke='#000' stroke-width='1'/><line x1='923' y1='639.5' x2='927' y2='639.5' stroke='#000' stroke-width='1'/><line x1='923' y1='611.5' x2='927' y2='611.5' stroke='#000' stroke-width='1'/><line x1='919' y1='582.5' x2='927' y2='582.5' stroke='#000' stroke-width='1'/><line x1='923' y1='553.5' x2='927' y2='553.5' stroke='#000' stroke-width='1'/><line x1='923' y1='525.5' x2='927' y2='525.5' stroke='#000' stroke-width='1'/><line x1='923' y1='496.5' x2='927' y2='496.5' stroke='#000' stroke-width='1'/><line x1='923' y1='468.5' x2='927' y2='468.5' stroke='#000' stroke-width='1'/><line x1='919' y1='439.5' x2='927' y2='439.5' stroke='#000' stroke-width='1'/><line x1='923' y1='410.5' x2='927' y2='410.5' stroke='#000' stroke-width='1'/><line x1='923' y1='382.5' x2='927' y2='382.5' stroke='#000' stroke-width='1'/><line x1='923' y1='353.5' x2='927' y2='353.5' stroke='#000' stroke-width='1'/><line x1='946.5' y1='929' x2='946.5' y2='934' stroke='#000' stroke-width='1'/><line x1='994.5' y1='929' x2='994.5' y2='938' stroke='#000' stroke-width='1'/><line x1='1042.5' y1='929' x2='1042.5' y2='934' stroke='#000' stroke-width='1'/><line x1='1091.5' y1='929' x2='1091.5' y2='934' stroke='#000' stroke-width='1'/><line x1='1139.5' y1='929' x2='1139.5' y2='934' stroke='#000' stroke-width='1'/><line x1='1188.5' y1='929' x2='1188.5' y2='934' stroke='#000' stroke-width='1'/><line x1='1236.5' y1='929' x2='1236.5' y2='938' stroke='#000' stroke-width='1'/><line x1='1284.5' y1='929' x2='1284.5' y2='934' stroke='#000' stroke-width='1'/><line x1='1333.5' y1='929' x2='1333.5' y2='934' stroke='#000' stroke-width='1'/><line x1='1381.5' y1='929' x2='1381.5' y2='934' stroke='#000' stroke-width='1'/><line x1='1430.5' y1='929' x2='1430.5' y2='934' stroke='#000' stroke-width='1'/><line x1='1477.5' y1='929' x2='1477.5' y2='938' stroke='#000' stroke-width='1'/><line x1='1526.5' y1='929' x2='1526.5' y2='934' stroke='#000' stroke-width='1'/><line x1='1575.5' y1='929' x2='1575.5' y2='934' stroke='#000' stroke-width='1'/><line x1='1623.5' y1='929' x2='1623.5' y2='934' stroke='#000' stroke-width='1'/><line x1='1672.5' y1='929' x2='1672.5' y2='934' stroke='#000' stroke-width='1'/><line x1='1720.5' y1='929' x2='1720.5' y2='938' stroke='#000' stroke-width='1'/></svg><div class=t style='left:938.03px;top:358.50px;font-size:18px;line-height:18px;font-weight:400;color:#000;font-family:"Liberation Sans",sans-serif;transform:scaleX(0.9828);transform-origin:0 0;'>Data saved in "c:\projects\data\2018\12\05\130105-1D CARBON+ WALTZ-Extrasyn S7"</div><div class=t style='left:908.00px;top:433.00px;font-size:14.5px;line-height:14.5px;font-weight:400;color:#000;font-family:"Liberation Sans",sans-serif;'>4</div><div class=t style='left:906.62px;top:575.50px;font-size:14.5px;line-height:14.5px;font-weight:400;color:#000;font-family:"Liberation Sans",sans-serif;transform:scaleX(1.3750);transform-origin:0 0;'>2</div><div class=t style='left:906.86px;top:718.75px;font-size:14.5px;line-height:14.5px;font-weight:400;color:#000;font-family:"Liberation Sans",sans-serif;transform:scaleX(1.1429);transform-origin:0 0;'>0</div><div class=t style='left:902.07px;top:861.00px;font-size:14.5px;line-height:14.5px;font-weight:400;color:#000;font-family:"Liberation Sans",sans-serif;transform:scaleX(1.1818);transform-origin:0 0;'>-2</div><div class=t style='left:980.89px;top:941.75px;font-size:14.5px;line-height:14.5px;font-weight:400;color:#000;font-family:"Liberation Sans",sans-serif;transform:scaleX(1.1087);transform-origin:0 0;'>150</div><div class=t style='left:1222.63px;top:941.75px;font-size:14.5px;line-height:14.5px;font-weight:400;color:#000;font-family:"Liberation Sans",sans-serif;transform:scaleX(1.1196);transform-origin:0 0;'>100</div><div class=t style='left:1468.14px;top:940.90px;font-size:14.5px;line-height:14.5px;font-weight:400;color:#000;font-family:"Liberation Sans",sans-serif;transform:scaleX(1.1600);transform-origin:0 0;'>50</div><div class=t style='left:1714.60px;top:940.90px;font-size:14.5px;line-height:14.5px;font-weight:400;color:#000;font-family:"Liberation Sans",sans-serif;transform:scaleX(1.3000);transform-origin:0 0;'>0</div><div class=t style='left:1314.84px;top:964.00px;font-size:17px;line-height:17px;font-weight:400;color:#000;font-family:"Liberation Sans",sans-serif;transform:scaleX(1.1613);transform-origin:0 0;'>ppm</div><div class=t style='left:836px;top:627px;width:90px;height:20px;font-size:17.5px;line-height:20px;text-align:center;transform:rotate(-90deg) scaleX(1.125);transform-origin:45px 10px;'>Amplitude</div><div class=a style='left:0;top:1025px;width:1920px;height:15px;background:linear-gradient(#e01c23,#a3161c 60%,#6f1318)'></div><div class=a style='left:0;top:1040px;width:1920px;height:40px;background:#0b0b0b'></div><svg class=a style='left:0;top:1040px' width=1920 height=40 viewBox='0 1040 1920 40'><path d='M15.5 1054.4 L22.9 1053.3 V1059.6 H15.5 Z M23.9 1053.1 L32 1051.9 V1059.6 H23.9 Z M15.5 1060.6 H22.9 V1066.9 L15.5 1065.8 Z M23.9 1060.6 H32 V1068.3 L23.9 1067.1 Z' fill='#fff'/><rect x='48' y='1040' width='344' height='40' fill='#f0f0f0'/><circle cx='68.2' cy='1060.2' r='9.2' fill='none' stroke='#141414' stroke-width='3'/><rect x='368.6' y='1052.3' width='4.8' height='10' rx='2.4' fill='none' stroke='#444' stroke-width='1.1'/><path d='M366.4 1059.3 Q366.4 1065.3 371 1065.3 Q375.6 1065.3 375.6 1059.3 M371 1065.3 V1068.2 M368.2 1068.2 H373.8' fill='none' stroke='#444' stroke-width='1.1'/><g fill='none' stroke='#fff' stroke-width='1.1'><path d='M408.5 1052 V1054.5 H419 V1052'/><rect x='408.5' y='1056.5' width='10.5' height='6.2'/><path d='M408.5 1067 V1064.7 H419 V1067'/><path d='M422.5 1052 V1054 M422.5 1060 V1067'/></g><rect x='421.3' y='1056.2' width='2.6' height='2.6' fill='#fff'/><path d='M456 1051 H465.5 L467 1052.6 H477.5 V1068 H456 Z' fill='#fde68c'/><path d='M456 1051 H465.5 L467 1052.6 V1053.6 H456 Z' fill='#f6c23c'/><path d='M460 1068.8 V1062 Q460 1061 461 1061 H472.8 Q473.8 1061 473.8 1062 V1068.8 H470 V1064 H464 V1068.8 Z' fill='#36b1e8'/><rect x='447' y='1077.8' width='40' height='2.2' fill='#7cc0f0'/><circle cx='516' cy='1059.6' r='11' fill='#db4437'/><path d='M516 1059.6 L525.5 1054.1 A11 11 0 0 1 521.5 1069.1 Z' fill='#f4c20d'/><path d='M516 1059.6 L521.5 1069.1 A11 11 0 0 1 506.5 1054.1 Z' fill='#0f9d58'/><circle cx='516' cy='1059.6' r='5.2' fill='#fff'/><circle cx='516' cy='1059.6' r='4.1' fill='#4285f4'/><rect x='554' y='1052' width='21.5' height='15' fill='#e8e8e8' stroke='#bbb' stroke-width='0.6'/><rect x='560' y='1053.5' width='8' height='12' fill='#1e7ad8'/><path d='M556 1055 H559 M556 1058 H559 M569 1055 H574 M569 1058 H574 M569 1061 H574 M569 1064 H574' stroke='#777' stroke-width='0.8'/><rect x='590' y='1040' width='48' height='40' fill='#3d3d3d'/><rect x='590' y='1077.8' width='48' height='2.2' fill='#7cc0f0'/><circle cx='614' cy='1059.7' r='11' fill='#1a0b0d'/><circle cx='613.8' cy='1059.6' r='8.2' fill='#fff'/><circle cx='613.8' cy='1059.3' r='3.4' fill='#b3242b'/><circle cx='613.4' cy='1049.6' r='2.4' fill='#fff'/><circle cx='613.4' cy='1049.6' r='1.4' fill='#c8303a'/><path d='M662.8 1048.7 L672.6 1054.3 V1065.5 L662.8 1071.1 L653 1065.5 V1054.3 Z' fill='#b8161f' stroke='#b8161f' stroke-width='1.2' stroke-linejoin='round'/><path d='M658.6 1064.3 L659.8 1056.3 L663.6 1061.3 L665.6 1056.8 L667 1061' fill='none' stroke='#fff' stroke-width='2.3' stroke-linecap='round' stroke-linejoin='round'/><defs><linearGradient id='tvg' x1='0' y1='0' x2='0' y2='1'><stop offset='0' stop-color='#1a8cf2'/><stop offset='1' stop-color='#0a62c6'/></linearGradient></defs><rect x='700.2' y='1048' width='23.8' height='23.7' rx='1.2' fill='url(#tvg)'/><circle cx='711.9' cy='1060' r='10.2' fill='#fff'/><path d='M703.8 1060 L708.4 1056.6 V1058.9 H715.4 V1056.6 L720 1060 L715.4 1063.4 V1061.1 H708.4 V1063.4 Z' fill='#0e72d6'/><rect x='692' y='1077.8' width='40' height='2.2' fill='#7cc0f0'/><g fill='none' stroke='#fff' stroke-width='1.1'><circle cx='1702' cy='1061' r='3.1'/><path d='M1698 1067 Q1699 1064.2 1702 1064.2 Q1705 1064.2 1706 1067'/><circle cx='1708.2' cy='1054.7' r='3.1'/><path d='M1706 1058 Q1707 1057.9 1708.2 1057.9 Q1711 1057.9 1711.8 1060.9'/></g><path d='M1735 1062.6 L1741 1056.4 L1747 1062.6' fill='none' stroke='#fff' stroke-width='1.1'/><g fill='none' stroke='#eee' stroke-width='1.1'><path d='M1759.9 1066 A10.6 10.6 0 0 1 1770.5 1055.4'/><path d='M1763.1 1066 A7.4 7.4 0 0 1 1770.5 1058.6'/><path d='M1766.2 1066 A4.3 4.3 0 0 1 1770.5 1061.7'/></g><circle cx='1770.5' cy='1065.5' r='1.3' fill='#fff'/><path d='M1781.6 1057.2 H1783.8 L1786.8 1054 V1065.8 L1783.8 1062.7 H1781.6 Z' fill='none' stroke='#fff' stroke-width='1.1'/><path d='M1789.7 1057.2 L1794.9 1062.6 M1794.9 1057.2 L1789.7 1062.6' stroke='#fff' stroke-width='1.1'/><path d='M1879 1051.8 H1895.2 V1065 H1885 L1886.3 1067.3 L1881.5 1065 H1879 Z' fill='#fff'/><path d='M1882 1055.5 H1892 M1882 1058.5 H1892 M1882 1061.3 H1887.5' stroke='#111' stroke-width='0.9'/><circle cx='1894.5' cy='1067.3' r='8.1' fill='#2b2b2b' stroke='#8a8a8a' stroke-width='0.9'/><rect x='1915' y='1040' width='1' height='40' fill='#6b6b6b'/></svg><div class=t style='left:88.00px;top:1053.00px;font-size:15px;line-height:15px;font-weight:400;color:#333;font-family:"Liberation Sans",sans-serif;transform:scaleX(0.9782);transform-origin:0 0;'>Zur Suche Text hier eingeben</div><div class=t style='left:1819.76px;top:1045.50px;font-size:11.5px;line-height:11.5px;font-weight:400;color:#fff;font-family:"Liberation Sans",sans-serif;transform:scaleX(0.9370);transform-origin:0 0;'>16:31</div><div class=t style='left:1806.04px;top:1063.00px;font-size:11.5px;line-height:11.5px;font-weight:400;color:#fff;font-family:"Liberation Sans",sans-serif;transform:scaleX(0.9643);transform-origin:0 0;'>05.12.2018</div><div class=t style='left:1891.30px;top:1061.50px;font-size:11px;line-height:11px;font-weight:700;color:#fff;font-family:"Liberation Sans",sans-serif;transform:scaleX(1.0667);transform-origin:0 0;'>2</div>
</body></html>
